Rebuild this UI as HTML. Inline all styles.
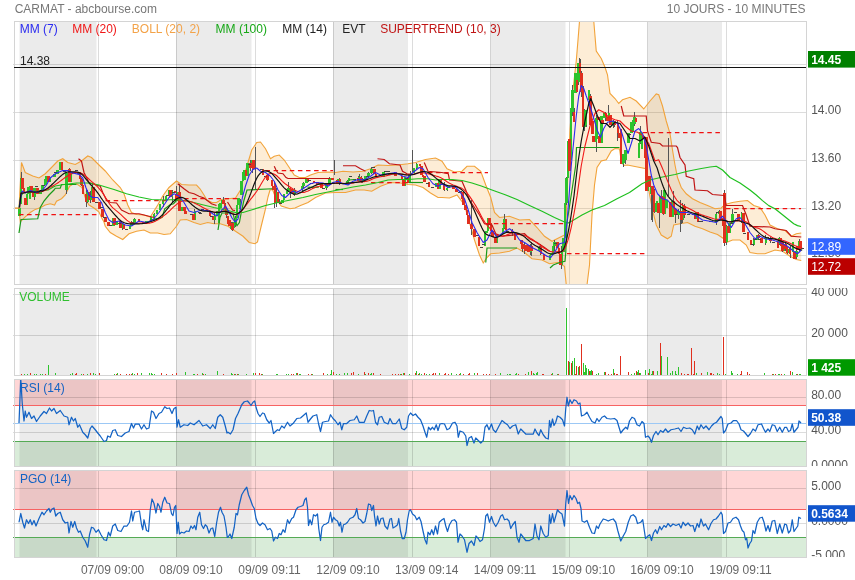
<!DOCTYPE html>
<html lang="fr"><head><meta charset="utf-8"><title>CARMAT - abcbourse.com</title>
<style>html,body{margin:0;padding:0;background:#fff}svg{display:block;will-change:transform}</style></head>
<body>
<svg width="855" height="580" viewBox="0 0 855 580" font-family="'Liberation Sans', Arial, sans-serif" font-size="12">
<defs>
<clipPath id="c1"><rect x="14" y="21" width="792" height="264"/></clipPath>
<clipPath id="t1"><rect x="806" y="21" width="49" height="263"/></clipPath>
<clipPath id="c2"><rect x="14" y="288" width="792" height="88"/></clipPath>
<clipPath id="t2"><rect x="806" y="288" width="49" height="87"/></clipPath>
<clipPath id="c3"><rect x="14" y="379" width="792" height="88"/></clipPath>
<clipPath id="t3"><rect x="806" y="379" width="49" height="87"/></clipPath>
<clipPath id="c4"><rect x="14" y="470" width="792" height="88"/></clipPath>
<clipPath id="t4"><rect x="806" y="470" width="49" height="87"/></clipPath>
</defs>
<rect width="855" height="580" fill="#fff"/>
<g shape-rendering="crispEdges">
<rect x="13" y="64" width="793" height="1" fill="#000" fill-opacity="0.137"/>
<rect x="13" y="112" width="793" height="1" fill="#000" fill-opacity="0.137"/>
<rect x="13" y="160" width="793" height="1" fill="#000" fill-opacity="0.137"/>
<rect x="13" y="208" width="793" height="1" fill="#000" fill-opacity="0.137"/>
<rect x="13" y="255" width="793" height="1" fill="#000" fill-opacity="0.137"/>
<rect x="98" y="21" width="1" height="263" fill="#000" fill-opacity="0.137"/>
<rect x="176" y="21" width="1" height="263" fill="#000" fill-opacity="0.137"/>
<rect x="255" y="21" width="1" height="263" fill="#000" fill-opacity="0.137"/>
<rect x="333" y="21" width="1" height="263" fill="#000" fill-opacity="0.137"/>
<rect x="412" y="21" width="1" height="263" fill="#000" fill-opacity="0.137"/>
<rect x="490" y="21" width="1" height="263" fill="#000" fill-opacity="0.137"/>
<rect x="569" y="21" width="1" height="263" fill="#000" fill-opacity="0.137"/>
<rect x="647" y="21" width="1" height="263" fill="#000" fill-opacity="0.137"/>
<rect x="726" y="21" width="1" height="263" fill="#000" fill-opacity="0.137"/>
<rect x="19.5" y="21" width="77.0" height="263" fill="#000" fill-opacity="0.08" shape-rendering="auto"/>
<rect x="176" y="21" width="75.5" height="263" fill="#000" fill-opacity="0.08" shape-rendering="auto"/>
<rect x="333" y="21" width="75" height="263" fill="#000" fill-opacity="0.08" shape-rendering="auto"/>
<rect x="490.5" y="21" width="75.0" height="263" fill="#000" fill-opacity="0.08" shape-rendering="auto"/>
<rect x="647.5" y="21" width="74.5" height="263" fill="#000" fill-opacity="0.08" shape-rendering="auto"/>
</g>
<g clip-path="url(#c1)">
<polygon points="19.00,208.00 21.50,162.50 25.25,172.50 32.75,176.00 39.00,178.00 45.25,173.75 51.50,167.50 57.75,161.00 62.75,158.75 67.75,162.50 75.25,164.50 81.50,161.00 87.75,156.00 91.50,157.50 98.50,164.50 105.25,171.00 112.75,180.00 120.25,187.50 124.00,193.75 127.75,205.00 131.50,212.50 136.50,214.50 144.00,215.00 150.25,217.00 157.75,205.00 162.75,196.00 169.00,187.50 176.50,181.00 181.50,184.50 189.00,185.00 196.50,185.00 200.00,188.75 204.00,195.00 207.00,200.00 212.00,202.50 216.50,202.50 221.50,199.50 228.00,198.75 235.50,198.00 240.50,190.00 244.25,175.00 248.00,162.50 251.75,150.00 256.75,142.50 260.50,142.00 265.50,148.75 270.50,158.75 274.25,156.25 279.25,155.00 284.25,160.00 289.25,167.50 294.25,175.00 299.25,177.50 305.50,177.50 310.50,175.00 318.00,172.50 328.00,172.00 335.50,172.50 343.00,171.25 353.00,172.00 363.00,171.25 370.50,168.75 378.00,165.00 388.00,165.50 398.00,165.00 408.00,163.75 415.50,162.50 425.50,159.50 435.50,158.00 442.00,161.25 447.00,168.75 454.50,172.00 462.00,171.25 467.00,166.25 474.50,166.25 480.75,171.25 485.75,185.00 490.75,197.50 494.50,212.50 499.50,217.50 509.50,216.25 519.50,220.00 529.50,219.50 537.00,227.50 544.50,236.25 552.00,241.25 559.50,237.50 564.50,235.00 566.25,215.00 568.00,170.00 570.00,130.00 573.00,90.00 576.25,61.00 578.00,40.00 580.00,15.00 585.00,5.00 590.00,8.00 593.75,21.00 595.00,36.00 596.25,51.00 601.25,58.50 605.00,67.25 607.50,74.75 610.00,93.50 615.00,98.50 618.75,103.50 622.50,99.75 630.00,97.25 636.25,101.00 643.75,109.00 650.00,101.00 656.25,94.00 658.75,94.75 662.50,106.00 666.25,121.00 670.00,133.50 672.50,150.00 675.00,165.00 677.50,177.50 681.25,187.50 686.25,193.75 692.50,198.75 700.00,202.50 707.50,205.50 715.00,208.75 721.25,208.00 725.00,204.50 732.50,202.50 740.00,201.25 747.50,200.50 753.75,205.50 760.00,207.50 765.00,215.00 770.00,225.00 777.50,228.75 785.00,230.50 791.25,236.25 796.25,233.75 801.25,233.00 801.25,260.50 796.25,259.50 790.00,256.25 782.50,251.25 775.00,250.00 765.00,253.75 757.50,253.75 750.00,252.50 746.25,245.00 740.00,240.00 732.50,240.00 726.25,242.50 723.75,238.75 717.50,234.50 710.00,232.00 702.50,228.75 695.00,226.25 687.50,222.50 680.00,223.75 673.75,225.00 671.25,236.25 667.50,238.75 661.25,235.00 656.25,225.00 652.50,210.00 648.75,190.00 646.25,168.75 637.50,167.00 627.50,165.00 623.75,165.50 621.25,161.00 619.50,149.00 615.00,148.50 611.25,151.00 606.25,159.75 601.25,161.00 597.00,167.50 594.50,185.00 592.00,215.00 589.50,265.00 587.00,285.00 585.00,320.00 575.00,340.00 568.00,320.00 566.25,285.00 564.50,266.25 557.00,262.50 549.50,263.75 542.00,260.00 532.00,258.75 524.50,252.50 517.00,248.00 509.50,251.25 499.50,253.00 490.75,253.75 487.00,257.50 483.25,263.00 479.50,255.00 474.50,240.00 469.50,222.50 464.50,205.00 457.00,195.00 449.50,198.00 442.00,197.50 438.00,197.50 430.50,193.00 423.00,187.50 415.50,185.00 408.00,184.50 400.50,183.00 390.50,182.50 380.50,186.25 371.75,191.25 364.25,190.00 355.50,190.00 345.50,192.50 335.50,192.50 325.50,193.00 315.50,197.50 308.00,202.50 300.50,205.50 295.00,208.00 290.00,208.75 281.25,206.00 277.50,201.00 275.00,196.00 272.50,189.50 270.00,190.00 268.00,197.00 265.00,211.00 261.25,226.00 257.50,242.00 255.00,243.75 249.25,242.50 243.00,236.25 235.50,231.25 228.00,226.25 220.25,223.75 214.00,223.75 207.75,222.50 200.25,224.50 194.00,222.50 186.50,219.50 180.25,220.00 176.50,226.25 170.25,233.75 164.00,234.50 157.75,233.00 150.25,233.00 144.00,230.00 136.50,231.25 129.00,233.75 122.75,239.50 116.50,236.25 110.25,232.50 105.25,226.25 104.00,222.00 101.50,217.50 99.00,212.00 94.00,208.00 89.00,205.00 86.00,200.00 84.00,193.75 82.00,187.50 76.50,183.75 72.75,184.40 69.60,186.25 67.75,190.00 65.25,195.00 61.50,198.75 56.50,201.25 54.60,205.00 50.25,203.75 45.25,205.00 40.90,207.50 35.25,209.40 30.25,212.50 25.25,216.90 20.25,221.90 19.00,208.00" fill="#f5a533" fill-opacity="0.2"/>
<polyline points="19.00,208.00 21.50,162.50 25.25,172.50 32.75,176.00 39.00,178.00 45.25,173.75 51.50,167.50 57.75,161.00 62.75,158.75 67.75,162.50 75.25,164.50 81.50,161.00 87.75,156.00 91.50,157.50 98.50,164.50 105.25,171.00 112.75,180.00 120.25,187.50 124.00,193.75 127.75,205.00 131.50,212.50 136.50,214.50 144.00,215.00 150.25,217.00 157.75,205.00 162.75,196.00 169.00,187.50 176.50,181.00 181.50,184.50 189.00,185.00 196.50,185.00 200.00,188.75 204.00,195.00 207.00,200.00 212.00,202.50 216.50,202.50 221.50,199.50 228.00,198.75 235.50,198.00 240.50,190.00 244.25,175.00 248.00,162.50 251.75,150.00 256.75,142.50 260.50,142.00 265.50,148.75 270.50,158.75 274.25,156.25 279.25,155.00 284.25,160.00 289.25,167.50 294.25,175.00 299.25,177.50 305.50,177.50 310.50,175.00 318.00,172.50 328.00,172.00 335.50,172.50 343.00,171.25 353.00,172.00 363.00,171.25 370.50,168.75 378.00,165.00 388.00,165.50 398.00,165.00 408.00,163.75 415.50,162.50 425.50,159.50 435.50,158.00 442.00,161.25 447.00,168.75 454.50,172.00 462.00,171.25 467.00,166.25 474.50,166.25 480.75,171.25 485.75,185.00 490.75,197.50 494.50,212.50 499.50,217.50 509.50,216.25 519.50,220.00 529.50,219.50 537.00,227.50 544.50,236.25 552.00,241.25 559.50,237.50 564.50,235.00 566.25,215.00 568.00,170.00 570.00,130.00 573.00,90.00 576.25,61.00 578.00,40.00 580.00,15.00 585.00,5.00 590.00,8.00 593.75,21.00 595.00,36.00 596.25,51.00 601.25,58.50 605.00,67.25 607.50,74.75 610.00,93.50 615.00,98.50 618.75,103.50 622.50,99.75 630.00,97.25 636.25,101.00 643.75,109.00 650.00,101.00 656.25,94.00 658.75,94.75 662.50,106.00 666.25,121.00 670.00,133.50 672.50,150.00 675.00,165.00 677.50,177.50 681.25,187.50 686.25,193.75 692.50,198.75 700.00,202.50 707.50,205.50 715.00,208.75 721.25,208.00 725.00,204.50 732.50,202.50 740.00,201.25 747.50,200.50 753.75,205.50 760.00,207.50 765.00,215.00 770.00,225.00 777.50,228.75 785.00,230.50 791.25,236.25 796.25,233.75 801.25,233.00" fill="none" stroke="#f2a33a" stroke-width="1.1"/>
<polyline points="19.00,208.00 20.25,221.90 25.25,216.90 30.25,212.50 35.25,209.40 40.90,207.50 45.25,205.00 50.25,203.75 54.60,205.00 56.50,201.25 61.50,198.75 65.25,195.00 67.75,190.00 69.60,186.25 72.75,184.40 76.50,183.75 82.00,187.50 84.00,193.75 86.00,200.00 89.00,205.00 94.00,208.00 99.00,212.00 101.50,217.50 104.00,222.00 105.25,226.25 110.25,232.50 116.50,236.25 122.75,239.50 129.00,233.75 136.50,231.25 144.00,230.00 150.25,233.00 157.75,233.00 164.00,234.50 170.25,233.75 176.50,226.25 180.25,220.00 186.50,219.50 194.00,222.50 200.25,224.50 207.75,222.50 214.00,223.75 220.25,223.75 228.00,226.25 235.50,231.25 243.00,236.25 249.25,242.50 255.00,243.75 257.50,242.00 261.25,226.00 265.00,211.00 268.00,197.00 270.00,190.00 272.50,189.50 275.00,196.00 277.50,201.00 281.25,206.00 290.00,208.75 295.00,208.00 300.50,205.50 308.00,202.50 315.50,197.50 325.50,193.00 335.50,192.50 345.50,192.50 355.50,190.00 364.25,190.00 371.75,191.25 380.50,186.25 390.50,182.50 400.50,183.00 408.00,184.50 415.50,185.00 423.00,187.50 430.50,193.00 438.00,197.50 442.00,197.50 449.50,198.00 457.00,195.00 464.50,205.00 469.50,222.50 474.50,240.00 479.50,255.00 483.25,263.00 487.00,257.50 490.75,253.75 499.50,253.00 509.50,251.25 517.00,248.00 524.50,252.50 532.00,258.75 542.00,260.00 549.50,263.75 557.00,262.50 564.50,266.25 566.25,285.00 568.00,320.00 575.00,340.00 585.00,320.00 587.00,285.00 589.50,265.00 592.00,215.00 594.50,185.00 597.00,167.50 601.25,161.00 606.25,159.75 611.25,151.00 615.00,148.50 619.50,149.00 621.25,161.00 623.75,165.50 627.50,165.00 637.50,167.00 646.25,168.75 648.75,190.00 652.50,210.00 656.25,225.00 661.25,235.00 667.50,238.75 671.25,236.25 673.75,225.00 680.00,223.75 687.50,222.50 695.00,226.25 702.50,228.75 710.00,232.00 717.50,234.50 723.75,238.75 726.25,242.50 732.50,240.00 740.00,240.00 746.25,245.00 750.00,252.50 757.50,253.75 765.00,253.75 775.00,250.00 782.50,251.25 790.00,256.25 796.25,259.50 801.25,260.50" fill="none" stroke="#f2a33a" stroke-width="1.1"/>
<g shape-rendering="crispEdges">
<rect x="34.1" y="187.9" width="1" height="11.8" fill="#555"/>
<rect x="65.8" y="171.6" width="1" height="22.1" fill="#555"/>
<rect x="68.9" y="168.4" width="1" height="13.6" fill="#555"/>
<rect x="81.0" y="178.0" width="1" height="7.8" fill="#555"/>
<rect x="85.5" y="188.5" width="1" height="18.6" fill="#555"/>
<rect x="87.0" y="189.5" width="1" height="13.2" fill="#555"/>
<rect x="90.0" y="190.9" width="1" height="11.9" fill="#555"/>
<rect x="91.5" y="184.0" width="1" height="15.2" fill="#555"/>
<rect x="121.7" y="222.5" width="1" height="7.9" fill="#555"/>
<rect x="130.8" y="220.7" width="1" height="5.4" fill="#555"/>
<rect x="133.8" y="218.3" width="1" height="4.7" fill="#555"/>
<rect x="153.5" y="212.5" width="1" height="6.6" fill="#555"/>
<rect x="162.5" y="195.7" width="1" height="11.4" fill="#555"/>
<rect x="171.6" y="190.1" width="1" height="13.2" fill="#555"/>
<rect x="176.1" y="186.0" width="1" height="15.4" fill="#555"/>
<rect x="179.2" y="184.2" width="1" height="27.2" fill="#555"/>
<rect x="194.3" y="209.4" width="1" height="11.0" fill="#555"/>
<rect x="213.9" y="213.3" width="1" height="10.5" fill="#555"/>
<rect x="218.5" y="203.9" width="1" height="18.9" fill="#555"/>
<rect x="223.0" y="197.4" width="1" height="6.8" fill="#555"/>
<rect x="224.5" y="202.6" width="1" height="8.7" fill="#555"/>
<rect x="226.0" y="208.2" width="1" height="9.5" fill="#555"/>
<rect x="230.5" y="222.4" width="1" height="7.0" fill="#555"/>
<rect x="232.1" y="222.2" width="1" height="8.6" fill="#555"/>
<rect x="235.1" y="215.8" width="1" height="11.4" fill="#555"/>
<rect x="239.6" y="199.0" width="1" height="11.0" fill="#555"/>
<rect x="250.2" y="159.8" width="1" height="10.8" fill="#555"/>
<rect x="251.7" y="159.7" width="1" height="13.5" fill="#555"/>
<rect x="266.8" y="173.8" width="1" height="6.9" fill="#555"/>
<rect x="274.4" y="181.6" width="1" height="26.8" fill="#555"/>
<rect x="275.9" y="188.1" width="1" height="19.3" fill="#555"/>
<rect x="278.9" y="199.2" width="1" height="5.1" fill="#555"/>
<rect x="288.0" y="182.0" width="1" height="9.8" fill="#555"/>
<rect x="289.5" y="186.9" width="1" height="10.8" fill="#555"/>
<rect x="291.0" y="189.0" width="1" height="4.1" fill="#555"/>
<rect x="292.5" y="190.1" width="1" height="5.0" fill="#555"/>
<rect x="294.0" y="187.8" width="1" height="7.7" fill="#555"/>
<rect x="301.6" y="186.0" width="1" height="5.5" fill="#555"/>
<rect x="303.1" y="181.9" width="1" height="7.5" fill="#555"/>
<rect x="307.6" y="177.5" width="1" height="4.0" fill="#555"/>
<rect x="325.7" y="184.0" width="1" height="6.0" fill="#555"/>
<rect x="328.8" y="177.4" width="1" height="7.4" fill="#555"/>
<rect x="339.3" y="178.4" width="1" height="6.4" fill="#555"/>
<rect x="346.9" y="179.8" width="1" height="4.9" fill="#555"/>
<rect x="357.5" y="176.0" width="1" height="5.2" fill="#555"/>
<rect x="359.0" y="174.1" width="1" height="8.3" fill="#555"/>
<rect x="360.5" y="175.8" width="1" height="6.8" fill="#555"/>
<rect x="362.0" y="178.2" width="1" height="4.5" fill="#555"/>
<rect x="368.0" y="171.9" width="1" height="6.0" fill="#555"/>
<rect x="371.1" y="166.8" width="1" height="7.1" fill="#555"/>
<rect x="375.6" y="173.6" width="1" height="3.8" fill="#555"/>
<rect x="410.3" y="170.8" width="1" height="3.4" fill="#555"/>
<rect x="416.4" y="163.1" width="1" height="6.2" fill="#555"/>
<rect x="420.9" y="165.6" width="1" height="9.8" fill="#555"/>
<rect x="422.4" y="171.3" width="1" height="4.9" fill="#555"/>
<rect x="443.6" y="181.9" width="1" height="9.5" fill="#555"/>
<rect x="446.6" y="186.1" width="1" height="4.8" fill="#555"/>
<rect x="470.8" y="222.6" width="1" height="12.5" fill="#555"/>
<rect x="504.0" y="214.4" width="1" height="14.6" fill="#555"/>
<rect x="511.6" y="228.8" width="1" height="7.5" fill="#555"/>
<rect x="522.2" y="243.2" width="1" height="8.7" fill="#555"/>
<rect x="523.7" y="242.0" width="1" height="12.1" fill="#555"/>
<rect x="529.7" y="243.6" width="1" height="11.1" fill="#555"/>
<rect x="531.2" y="242.2" width="1" height="13.9" fill="#555"/>
<rect x="538.8" y="245.8" width="1" height="6.1" fill="#555"/>
<rect x="540.3" y="244.2" width="1" height="10.5" fill="#555"/>
<rect x="553.9" y="240.0" width="1" height="11.1" fill="#555"/>
<rect x="561.4" y="246.4" width="1" height="23.0" fill="#555"/>
<rect x="566.0" y="177.1" width="1" height="27.5" fill="#555"/>
<rect x="572.0" y="84.6" width="1" height="31.8" fill="#555"/>
<rect x="573.5" y="107.8" width="1" height="14.6" fill="#555"/>
<rect x="578.1" y="62.7" width="1" height="22.4" fill="#555"/>
<rect x="579.6" y="59.3" width="1" height="15.5" fill="#555"/>
<rect x="581.1" y="71.3" width="1" height="26.1" fill="#555"/>
<rect x="582.6" y="85.8" width="1" height="43.8" fill="#555"/>
<rect x="584.1" y="109.2" width="1" height="21.3" fill="#555"/>
<rect x="585.6" y="109.6" width="1" height="17.7" fill="#555"/>
<rect x="590.2" y="94.1" width="1" height="31.2" fill="#555"/>
<rect x="596.2" y="114.9" width="1" height="28.5" fill="#555"/>
<rect x="600.7" y="115.7" width="1" height="27.2" fill="#555"/>
<rect x="605.3" y="111.5" width="1" height="9.8" fill="#555"/>
<rect x="608.3" y="104.9" width="1" height="15.5" fill="#555"/>
<rect x="611.3" y="120.4" width="1" height="5.3" fill="#555"/>
<rect x="612.8" y="119.7" width="1" height="8.2" fill="#555"/>
<rect x="614.3" y="120.5" width="1" height="6.4" fill="#555"/>
<rect x="617.4" y="119.6" width="1" height="21.3" fill="#555"/>
<rect x="623.4" y="153.6" width="1" height="13.6" fill="#555"/>
<rect x="624.9" y="150.0" width="1" height="14.4" fill="#555"/>
<rect x="634.0" y="112.2" width="1" height="13.3" fill="#555"/>
<rect x="638.5" y="137.8" width="1" height="20.4" fill="#555"/>
<rect x="640.0" y="126.1" width="1" height="18.1" fill="#555"/>
<rect x="653.6" y="189.1" width="1" height="23.9" fill="#555"/>
<rect x="661.2" y="190.3" width="1" height="10.3" fill="#555"/>
<rect x="662.7" y="195.7" width="1" height="19.5" fill="#555"/>
<rect x="673.3" y="190.5" width="1" height="23.0" fill="#555"/>
<rect x="674.8" y="208.1" width="1" height="14.4" fill="#555"/>
<rect x="677.8" y="208.8" width="1" height="9.8" fill="#555"/>
<rect x="680.8" y="210.7" width="1" height="13.2" fill="#555"/>
<rect x="682.3" y="202.7" width="1" height="20.2" fill="#555"/>
<rect x="683.8" y="204.1" width="1" height="13.8" fill="#555"/>
<rect x="715.6" y="213.4" width="1" height="11.7" fill="#555"/>
<rect x="718.6" y="209.8" width="1" height="4.6" fill="#555"/>
<rect x="723.1" y="215.4" width="1" height="12.4" fill="#555"/>
<rect x="726.1" y="224.6" width="1" height="20.3" fill="#555"/>
<rect x="732.2" y="209.4" width="1" height="14.9" fill="#555"/>
<rect x="741.3" y="211.7" width="1" height="11.4" fill="#555"/>
<rect x="753.3" y="238.4" width="1" height="8.0" fill="#555"/>
<rect x="757.9" y="234.0" width="1" height="5.2" fill="#555"/>
<rect x="765.4" y="235.2" width="1" height="10.2" fill="#555"/>
<rect x="770.0" y="237.2" width="1" height="5.5" fill="#555"/>
<rect x="779.0" y="237.1" width="1" height="7.6" fill="#555"/>
<rect x="782.1" y="241.5" width="1" height="10.7" fill="#555"/>
<rect x="785.1" y="243.0" width="1" height="7.7" fill="#555"/>
<rect x="786.6" y="246.8" width="1" height="7.3" fill="#555"/>
<rect x="789.6" y="246.1" width="1" height="11.6" fill="#555"/>
<rect x="795.7" y="248.1" width="1" height="10.8" fill="#555"/>
<rect x="798.7" y="239.2" width="1" height="11.3" fill="#555"/>
<rect x="800.2" y="240.7" width="1" height="7.9" fill="#555"/>
<rect x="566.8" y="141.0" width="1" height="49.0" fill="#555"/>
<rect x="596.1" y="117.0" width="1" height="35.0" fill="#555"/>
<rect x="650.5" y="186.0" width="1" height="34.0" fill="#555"/>
<rect x="255.0" y="147.0" width="1" height="43.0" fill="#555"/>
<rect x="412.0" y="150.0" width="1" height="22.0" fill="#555"/>
<rect x="333.5" y="160.0" width="1" height="15.0" fill="#555"/>
<rect x="668.0" y="138.0" width="1" height="58.0" fill="#555"/>
<rect x="578.8" y="58.0" width="1" height="17.0" fill="#555"/>
<rect x="21.0" y="172.0" width="1" height="32.0" fill="#555"/>
<rect x="724.0" y="190.0" width="1" height="56.0" fill="#555"/>
<rect x="651.5" y="195.0" width="1" height="27.0" fill="#555"/>
<rect x="658.5" y="200.0" width="1" height="28.0" fill="#555"/>
<rect x="470.5" y="200.0" width="1" height="30.0" fill="#555"/>
<rect x="679.5" y="200.0" width="1" height="32.0" fill="#555"/>
<rect x="18.2" y="208.0" width="2.6" height="7.6" fill="#2dc42d"/>
<rect x="19.7" y="178.0" width="2.6" height="25.7" fill="#2dc42d"/>
<rect x="25.8" y="194.0" width="2.6" height="11.0" fill="#2dc42d"/>
<rect x="27.3" y="186.8" width="2.6" height="7.2" fill="#2dc42d"/>
<rect x="28.8" y="186.0" width="2.6" height="13.0" fill="#2dc42d"/>
<rect x="33.3" y="188.0" width="2.6" height="9.0" fill="#2dc42d"/>
<rect x="39.4" y="190.3" width="2.6" height="3.4" fill="#2dc42d"/>
<rect x="40.9" y="185.0" width="2.6" height="5.3" fill="#2dc42d"/>
<rect x="43.9" y="179.0" width="2.6" height="6.0" fill="#2dc42d"/>
<rect x="45.4" y="175.7" width="2.6" height="3.4" fill="#2dc42d"/>
<rect x="48.4" y="176.5" width="2.6" height="5.3" fill="#2dc42d"/>
<rect x="53.0" y="173.8" width="2.6" height="2.7" fill="#2dc42d"/>
<rect x="56.0" y="169.6" width="2.6" height="4.2" fill="#2dc42d"/>
<rect x="59.0" y="161.8" width="2.6" height="7.8" fill="#2dc42d"/>
<rect x="65.0" y="172.5" width="2.6" height="17.5" fill="#2dc42d"/>
<rect x="69.6" y="171.6" width="2.6" height="10.4" fill="#2dc42d"/>
<rect x="86.2" y="192.1" width="2.6" height="9.7" fill="#2dc42d"/>
<rect x="89.2" y="195.0" width="2.6" height="5.0" fill="#2dc42d"/>
<rect x="90.7" y="186.7" width="2.6" height="8.3" fill="#2dc42d"/>
<rect x="111.9" y="217.5" width="2.6" height="8.5" fill="#2dc42d"/>
<rect x="114.9" y="221.0" width="2.6" height="4.0" fill="#2dc42d"/>
<rect x="120.9" y="224.3" width="2.6" height="3.5" fill="#2dc42d"/>
<rect x="128.5" y="226.0" width="2.6" height="3.1" fill="#2dc42d"/>
<rect x="130.0" y="222.9" width="2.6" height="3.2" fill="#2dc42d"/>
<rect x="133.0" y="218.5" width="2.6" height="4.3" fill="#2dc42d"/>
<rect x="143.6" y="222.6" width="2.6" height="1.8" fill="#2dc42d"/>
<rect x="145.1" y="221.0" width="2.6" height="1.6" fill="#2dc42d"/>
<rect x="149.7" y="217.4" width="2.6" height="3.6" fill="#2dc42d"/>
<rect x="152.7" y="214.2" width="2.6" height="3.1" fill="#2dc42d"/>
<rect x="155.7" y="210.2" width="2.6" height="4.0" fill="#2dc42d"/>
<rect x="158.7" y="203.9" width="2.6" height="6.3" fill="#2dc42d"/>
<rect x="161.7" y="200.1" width="2.6" height="3.8" fill="#2dc42d"/>
<rect x="164.8" y="196.1" width="2.6" height="4.0" fill="#2dc42d"/>
<rect x="167.8" y="190.1" width="2.6" height="6.1" fill="#2dc42d"/>
<rect x="170.8" y="190.6" width="2.6" height="6.0" fill="#2dc42d"/>
<rect x="176.9" y="191.8" width="2.6" height="9.6" fill="#2dc42d"/>
<rect x="179.9" y="206.6" width="2.6" height="4.5" fill="#2dc42d"/>
<rect x="193.5" y="211.4" width="2.6" height="8.5" fill="#2dc42d"/>
<rect x="213.1" y="215.6" width="2.6" height="4.5" fill="#2dc42d"/>
<rect x="216.1" y="210.7" width="2.6" height="4.9" fill="#2dc42d"/>
<rect x="217.7" y="204.0" width="2.6" height="18.5" fill="#2dc42d"/>
<rect x="219.2" y="203.0" width="2.6" height="5.0" fill="#2dc42d"/>
<rect x="220.7" y="200.4" width="2.6" height="2.6" fill="#2dc42d"/>
<rect x="229.7" y="223.0" width="2.6" height="6.0" fill="#2dc42d"/>
<rect x="232.8" y="222.0" width="2.6" height="6.0" fill="#2dc42d"/>
<rect x="234.3" y="217.5" width="2.6" height="7.5" fill="#2dc42d"/>
<rect x="235.8" y="205.1" width="2.6" height="12.4" fill="#2dc42d"/>
<rect x="237.3" y="197.6" width="2.6" height="7.5" fill="#2dc42d"/>
<rect x="238.8" y="202.0" width="2.6" height="7.0" fill="#2dc42d"/>
<rect x="240.3" y="181.0" width="2.6" height="14.0" fill="#2dc42d"/>
<rect x="241.8" y="172.0" width="2.6" height="9.0" fill="#2dc42d"/>
<rect x="243.3" y="170.0" width="2.6" height="10.0" fill="#2dc42d"/>
<rect x="246.4" y="162.9" width="2.6" height="12.9" fill="#2dc42d"/>
<rect x="250.9" y="160.0" width="2.6" height="7.8" fill="#2dc42d"/>
<rect x="275.1" y="191.9" width="2.6" height="11.1" fill="#2dc42d"/>
<rect x="281.1" y="200.1" width="2.6" height="2.5" fill="#2dc42d"/>
<rect x="282.6" y="194.0" width="2.6" height="6.1" fill="#2dc42d"/>
<rect x="285.6" y="190.8" width="2.6" height="3.2" fill="#2dc42d"/>
<rect x="287.2" y="187.7" width="2.6" height="3.1" fill="#2dc42d"/>
<rect x="293.2" y="190.2" width="2.6" height="3.8" fill="#2dc42d"/>
<rect x="300.8" y="186.4" width="2.6" height="3.8" fill="#2dc42d"/>
<rect x="302.3" y="183.3" width="2.6" height="3.1" fill="#2dc42d"/>
<rect x="305.3" y="179.1" width="2.6" height="4.3" fill="#2dc42d"/>
<rect x="317.4" y="182.9" width="2.6" height="2.3" fill="#2dc42d"/>
<rect x="324.9" y="184.1" width="2.6" height="4.0" fill="#2dc42d"/>
<rect x="328.0" y="178.4" width="2.6" height="5.6" fill="#2dc42d"/>
<rect x="337.0" y="179.4" width="2.6" height="4.1" fill="#2dc42d"/>
<rect x="346.1" y="181.4" width="2.6" height="3.1" fill="#2dc42d"/>
<rect x="347.6" y="178.2" width="2.6" height="3.2" fill="#2dc42d"/>
<rect x="358.2" y="176.9" width="2.6" height="4.0" fill="#2dc42d"/>
<rect x="361.2" y="179.9" width="2.6" height="2.4" fill="#2dc42d"/>
<rect x="364.2" y="176.3" width="2.6" height="3.5" fill="#2dc42d"/>
<rect x="367.2" y="173.1" width="2.6" height="3.2" fill="#2dc42d"/>
<rect x="370.3" y="168.7" width="2.6" height="4.4" fill="#2dc42d"/>
<rect x="382.4" y="172.1" width="2.6" height="5.1" fill="#2dc42d"/>
<rect x="403.5" y="176.8" width="2.6" height="9.2" fill="#2dc42d"/>
<rect x="408.0" y="173.9" width="2.6" height="9.1" fill="#2dc42d"/>
<rect x="409.5" y="172.7" width="2.6" height="1.5" fill="#2dc42d"/>
<rect x="412.6" y="167.6" width="2.6" height="5.1" fill="#2dc42d"/>
<rect x="415.6" y="164.4" width="2.6" height="3.1" fill="#2dc42d"/>
<rect x="435.2" y="182.5" width="2.6" height="4.2" fill="#2dc42d"/>
<rect x="438.3" y="178.9" width="2.6" height="9.9" fill="#2dc42d"/>
<rect x="445.8" y="188.3" width="2.6" height="1.7" fill="#2dc42d"/>
<rect x="447.3" y="185.8" width="2.6" height="2.4" fill="#2dc42d"/>
<rect x="483.6" y="233.2" width="2.6" height="12.3" fill="#2dc42d"/>
<rect x="485.1" y="230.5" width="2.6" height="2.7" fill="#2dc42d"/>
<rect x="486.6" y="218.2" width="2.6" height="12.4" fill="#2dc42d"/>
<rect x="495.7" y="233.9" width="2.6" height="9.2" fill="#2dc42d"/>
<rect x="501.7" y="227.8" width="2.6" height="6.1" fill="#2dc42d"/>
<rect x="503.2" y="219.1" width="2.6" height="8.7" fill="#2dc42d"/>
<rect x="522.9" y="244.5" width="2.6" height="4.4" fill="#2dc42d"/>
<rect x="525.9" y="245.4" width="2.6" height="5.6" fill="#2dc42d"/>
<rect x="528.9" y="245.6" width="2.6" height="6.6" fill="#2dc42d"/>
<rect x="538.0" y="247.2" width="2.6" height="3.9" fill="#2dc42d"/>
<rect x="548.6" y="255.0" width="2.6" height="4.7" fill="#2dc42d"/>
<rect x="550.1" y="253.2" width="2.6" height="1.8" fill="#2dc42d"/>
<rect x="551.6" y="246.4" width="2.6" height="6.8" fill="#2dc42d"/>
<rect x="553.1" y="242.0" width="2.6" height="4.3" fill="#2dc42d"/>
<rect x="560.6" y="251.9" width="2.6" height="13.0" fill="#2dc42d"/>
<rect x="562.2" y="237.9" width="2.6" height="14.0" fill="#2dc42d"/>
<rect x="563.7" y="202.9" width="2.6" height="35.0" fill="#2dc42d"/>
<rect x="565.2" y="177.8" width="2.6" height="25.1" fill="#2dc42d"/>
<rect x="566.7" y="141.0" width="2.6" height="37.0" fill="#2dc42d"/>
<rect x="569.7" y="108.0" width="2.6" height="52.0" fill="#2dc42d"/>
<rect x="571.2" y="90.0" width="2.6" height="22.0" fill="#2dc42d"/>
<rect x="574.2" y="72.5" width="2.6" height="20.0" fill="#2dc42d"/>
<rect x="577.3" y="63.0" width="2.6" height="19.0" fill="#2dc42d"/>
<rect x="583.3" y="110.0" width="2.6" height="17.0" fill="#2dc42d"/>
<rect x="584.8" y="110.0" width="2.6" height="15.0" fill="#2dc42d"/>
<rect x="587.8" y="90.0" width="2.6" height="10.0" fill="#2dc42d"/>
<rect x="593.9" y="138.6" width="2.6" height="3.4" fill="#2dc42d"/>
<rect x="595.4" y="117.5" width="2.6" height="21.5" fill="#2dc42d"/>
<rect x="599.9" y="115.9" width="2.6" height="26.6" fill="#2dc42d"/>
<rect x="603.0" y="113.0" width="2.6" height="5.0" fill="#2dc42d"/>
<rect x="607.5" y="113.0" width="2.6" height="4.0" fill="#2dc42d"/>
<rect x="610.5" y="120.8" width="2.6" height="4.2" fill="#2dc42d"/>
<rect x="612.0" y="121.0" width="2.6" height="4.0" fill="#2dc42d"/>
<rect x="621.1" y="153.8" width="2.6" height="10.0" fill="#2dc42d"/>
<rect x="622.6" y="158.0" width="2.6" height="5.0" fill="#2dc42d"/>
<rect x="624.1" y="150.0" width="2.6" height="10.0" fill="#2dc42d"/>
<rect x="627.1" y="132.5" width="2.6" height="10.0" fill="#2dc42d"/>
<rect x="630.2" y="121.5" width="2.6" height="11.0" fill="#2dc42d"/>
<rect x="631.7" y="120.0" width="2.6" height="11.0" fill="#2dc42d"/>
<rect x="633.2" y="117.0" width="2.6" height="7.0" fill="#2dc42d"/>
<rect x="637.7" y="142.5" width="2.6" height="15.0" fill="#2dc42d"/>
<rect x="639.2" y="131.7" width="2.6" height="10.8" fill="#2dc42d"/>
<rect x="640.7" y="136.0" width="2.6" height="13.0" fill="#2dc42d"/>
<rect x="646.8" y="176.0" width="2.6" height="15.0" fill="#2dc42d"/>
<rect x="649.8" y="186.0" width="2.6" height="8.0" fill="#2dc42d"/>
<rect x="654.3" y="203.0" width="2.6" height="9.0" fill="#2dc42d"/>
<rect x="655.8" y="200.5" width="2.6" height="2.5" fill="#2dc42d"/>
<rect x="658.9" y="195.9" width="2.6" height="17.1" fill="#2dc42d"/>
<rect x="663.4" y="190.1" width="2.6" height="23.9" fill="#2dc42d"/>
<rect x="664.9" y="200.0" width="2.6" height="8.0" fill="#2dc42d"/>
<rect x="671.0" y="201.3" width="2.6" height="15.7" fill="#2dc42d"/>
<rect x="677.0" y="210.8" width="2.6" height="4.4" fill="#2dc42d"/>
<rect x="681.5" y="205.7" width="2.6" height="14.6" fill="#2dc42d"/>
<rect x="695.1" y="211.9" width="2.6" height="6.9" fill="#2dc42d"/>
<rect x="714.8" y="213.6" width="2.6" height="8.7" fill="#2dc42d"/>
<rect x="717.8" y="210.6" width="2.6" height="3.0" fill="#2dc42d"/>
<rect x="725.3" y="226.0" width="2.6" height="16.0" fill="#2dc42d"/>
<rect x="728.4" y="222.6" width="2.6" height="9.9" fill="#2dc42d"/>
<rect x="731.4" y="213.6" width="2.6" height="9.0" fill="#2dc42d"/>
<rect x="740.5" y="212.9" width="2.6" height="7.6" fill="#2dc42d"/>
<rect x="752.5" y="239.5" width="2.6" height="5.2" fill="#2dc42d"/>
<rect x="755.6" y="235.4" width="2.6" height="4.1" fill="#2dc42d"/>
<rect x="764.6" y="238.2" width="2.6" height="4.5" fill="#2dc42d"/>
<rect x="778.2" y="238.0" width="2.6" height="6.0" fill="#2dc42d"/>
<rect x="782.8" y="244.3" width="2.6" height="6.7" fill="#2dc42d"/>
<rect x="787.3" y="249.1" width="2.6" height="3.9" fill="#2dc42d"/>
<rect x="791.8" y="242.0" width="2.6" height="10.0" fill="#2dc42d"/>
<rect x="794.9" y="251.0" width="2.6" height="6.0" fill="#2dc42d"/>
<rect x="797.9" y="241.0" width="2.6" height="8.0" fill="#2dc42d"/>
<rect x="21.2" y="178.0" width="2.6" height="10.5" fill="#e0301e"/>
<rect x="22.7" y="188.0" width="2.6" height="4.5" fill="#e0301e"/>
<rect x="24.2" y="198.0" width="2.6" height="7.0" fill="#e0301e"/>
<rect x="30.3" y="186.0" width="2.6" height="6.2" fill="#e0301e"/>
<rect x="31.8" y="192.2" width="2.6" height="5.1" fill="#e0301e"/>
<rect x="36.3" y="188.0" width="2.6" height="5.7" fill="#e0301e"/>
<rect x="46.9" y="175.7" width="2.6" height="6.1" fill="#e0301e"/>
<rect x="60.5" y="161.8" width="2.6" height="8.1" fill="#e0301e"/>
<rect x="68.1" y="169.0" width="2.6" height="13.0" fill="#e0301e"/>
<rect x="78.6" y="171.6" width="2.6" height="7.2" fill="#e0301e"/>
<rect x="80.2" y="178.8" width="2.6" height="6.3" fill="#e0301e"/>
<rect x="81.7" y="185.1" width="2.6" height="8.4" fill="#e0301e"/>
<rect x="84.7" y="193.5" width="2.6" height="8.2" fill="#e0301e"/>
<rect x="87.7" y="192.1" width="2.6" height="8.0" fill="#e0301e"/>
<rect x="92.2" y="186.7" width="2.6" height="15.0" fill="#e0301e"/>
<rect x="98.3" y="201.8" width="2.6" height="7.1" fill="#e0301e"/>
<rect x="101.3" y="208.8" width="2.6" height="8.6" fill="#e0301e"/>
<rect x="104.3" y="217.4" width="2.6" height="4.3" fill="#e0301e"/>
<rect x="107.3" y="221.7" width="2.6" height="4.3" fill="#e0301e"/>
<rect x="113.4" y="217.5" width="2.6" height="7.4" fill="#e0301e"/>
<rect x="119.4" y="221.0" width="2.6" height="6.8" fill="#e0301e"/>
<rect x="122.5" y="224.3" width="2.6" height="4.9" fill="#e0301e"/>
<rect x="137.6" y="218.5" width="2.6" height="3.5" fill="#e0301e"/>
<rect x="142.1" y="222.0" width="2.6" height="2.4" fill="#e0301e"/>
<rect x="169.3" y="190.1" width="2.6" height="6.6" fill="#e0301e"/>
<rect x="173.8" y="190.6" width="2.6" height="2.8" fill="#e0301e"/>
<rect x="175.3" y="193.5" width="2.6" height="7.9" fill="#e0301e"/>
<rect x="178.4" y="191.8" width="2.6" height="19.4" fill="#e0301e"/>
<rect x="182.9" y="206.6" width="2.6" height="3.9" fill="#e0301e"/>
<rect x="184.4" y="210.5" width="2.6" height="3.0" fill="#e0301e"/>
<rect x="192.0" y="213.6" width="2.6" height="6.3" fill="#e0301e"/>
<rect x="208.6" y="211.4" width="2.6" height="4.8" fill="#e0301e"/>
<rect x="211.6" y="216.1" width="2.6" height="4.0" fill="#e0301e"/>
<rect x="222.2" y="200.4" width="2.6" height="3.8" fill="#e0301e"/>
<rect x="223.7" y="204.2" width="2.6" height="4.6" fill="#e0301e"/>
<rect x="225.2" y="208.8" width="2.6" height="6.5" fill="#e0301e"/>
<rect x="226.7" y="216.0" width="2.6" height="8.0" fill="#e0301e"/>
<rect x="228.2" y="220.0" width="2.6" height="6.0" fill="#e0301e"/>
<rect x="231.3" y="223.0" width="2.6" height="6.9" fill="#e0301e"/>
<rect x="244.8" y="170.0" width="2.6" height="5.8" fill="#e0301e"/>
<rect x="249.4" y="162.9" width="2.6" height="4.9" fill="#e0301e"/>
<rect x="252.4" y="160.0" width="2.6" height="9.4" fill="#e0301e"/>
<rect x="261.5" y="169.4" width="2.6" height="5.8" fill="#e0301e"/>
<rect x="266.0" y="175.2" width="2.6" height="5.1" fill="#e0301e"/>
<rect x="270.5" y="180.4" width="2.6" height="5.9" fill="#e0301e"/>
<rect x="272.0" y="186.2" width="2.6" height="3.7" fill="#e0301e"/>
<rect x="273.6" y="184.0" width="2.6" height="19.0" fill="#e0301e"/>
<rect x="276.6" y="191.9" width="2.6" height="9.9" fill="#e0301e"/>
<rect x="278.1" y="201.9" width="2.6" height="1.5" fill="#e0301e"/>
<rect x="288.7" y="187.7" width="2.6" height="1.7" fill="#e0301e"/>
<rect x="290.2" y="189.4" width="2.6" height="2.7" fill="#e0301e"/>
<rect x="291.7" y="192.0" width="2.6" height="2.0" fill="#e0301e"/>
<rect x="306.8" y="179.1" width="2.6" height="2.3" fill="#e0301e"/>
<rect x="312.8" y="181.3" width="2.6" height="1.5" fill="#e0301e"/>
<rect x="315.9" y="182.4" width="2.6" height="2.8" fill="#e0301e"/>
<rect x="320.4" y="182.9" width="2.6" height="5.1" fill="#e0301e"/>
<rect x="331.0" y="178.4" width="2.6" height="1.5" fill="#e0301e"/>
<rect x="335.5" y="179.6" width="2.6" height="4.0" fill="#e0301e"/>
<rect x="338.5" y="179.4" width="2.6" height="5.0" fill="#e0301e"/>
<rect x="356.7" y="178.2" width="2.6" height="2.7" fill="#e0301e"/>
<rect x="359.7" y="176.9" width="2.6" height="5.3" fill="#e0301e"/>
<rect x="373.3" y="168.7" width="2.6" height="5.2" fill="#e0301e"/>
<rect x="374.8" y="174.0" width="2.6" height="3.2" fill="#e0301e"/>
<rect x="394.4" y="172.1" width="2.6" height="4.1" fill="#e0301e"/>
<rect x="400.5" y="176.2" width="2.6" height="4.0" fill="#e0301e"/>
<rect x="402.0" y="180.2" width="2.6" height="5.8" fill="#e0301e"/>
<rect x="406.5" y="176.8" width="2.6" height="6.2" fill="#e0301e"/>
<rect x="418.6" y="164.4" width="2.6" height="1.8" fill="#e0301e"/>
<rect x="420.1" y="166.2" width="2.6" height="8.8" fill="#e0301e"/>
<rect x="421.6" y="175.0" width="2.6" height="1.5" fill="#e0301e"/>
<rect x="423.1" y="176.2" width="2.6" height="5.6" fill="#e0301e"/>
<rect x="427.7" y="181.8" width="2.6" height="4.8" fill="#e0301e"/>
<rect x="436.7" y="182.5" width="2.6" height="6.3" fill="#e0301e"/>
<rect x="439.8" y="178.9" width="2.6" height="6.3" fill="#e0301e"/>
<rect x="442.8" y="185.3" width="2.6" height="4.7" fill="#e0301e"/>
<rect x="451.9" y="185.8" width="2.6" height="3.2" fill="#e0301e"/>
<rect x="454.9" y="189.1" width="2.6" height="3.1" fill="#e0301e"/>
<rect x="460.9" y="192.2" width="2.6" height="6.7" fill="#e0301e"/>
<rect x="462.4" y="198.9" width="2.6" height="5.8" fill="#e0301e"/>
<rect x="463.9" y="204.6" width="2.6" height="5.6" fill="#e0301e"/>
<rect x="465.5" y="210.2" width="2.6" height="4.5" fill="#e0301e"/>
<rect x="467.0" y="214.7" width="2.6" height="9.0" fill="#e0301e"/>
<rect x="470.0" y="223.7" width="2.6" height="4.9" fill="#e0301e"/>
<rect x="473.0" y="228.5" width="2.6" height="8.7" fill="#e0301e"/>
<rect x="477.5" y="237.3" width="2.6" height="8.2" fill="#e0301e"/>
<rect x="488.1" y="218.2" width="2.6" height="4.5" fill="#e0301e"/>
<rect x="489.6" y="222.6" width="2.6" height="7.9" fill="#e0301e"/>
<rect x="491.1" y="230.5" width="2.6" height="6.4" fill="#e0301e"/>
<rect x="494.2" y="237.0" width="2.6" height="6.1" fill="#e0301e"/>
<rect x="504.7" y="219.1" width="2.6" height="11.1" fill="#e0301e"/>
<rect x="510.8" y="230.3" width="2.6" height="3.1" fill="#e0301e"/>
<rect x="513.8" y="233.3" width="2.6" height="6.5" fill="#e0301e"/>
<rect x="519.9" y="239.8" width="2.6" height="4.0" fill="#e0301e"/>
<rect x="521.4" y="243.9" width="2.6" height="5.0" fill="#e0301e"/>
<rect x="524.4" y="244.5" width="2.6" height="6.5" fill="#e0301e"/>
<rect x="527.4" y="245.4" width="2.6" height="6.8" fill="#e0301e"/>
<rect x="530.4" y="245.6" width="2.6" height="5.5" fill="#e0301e"/>
<rect x="539.5" y="247.2" width="2.6" height="7.1" fill="#e0301e"/>
<rect x="542.5" y="254.3" width="2.6" height="5.4" fill="#e0301e"/>
<rect x="556.1" y="242.0" width="2.6" height="5.8" fill="#e0301e"/>
<rect x="557.6" y="247.8" width="2.6" height="5.8" fill="#e0301e"/>
<rect x="559.1" y="253.6" width="2.6" height="11.3" fill="#e0301e"/>
<rect x="568.2" y="139.0" width="2.6" height="32.0" fill="#e0301e"/>
<rect x="572.7" y="112.0" width="2.6" height="10.0" fill="#e0301e"/>
<rect x="575.8" y="80.0" width="2.6" height="12.0" fill="#e0301e"/>
<rect x="578.8" y="63.0" width="2.6" height="10.0" fill="#e0301e"/>
<rect x="580.3" y="73.0" width="2.6" height="19.0" fill="#e0301e"/>
<rect x="581.8" y="89.0" width="2.6" height="38.0" fill="#e0301e"/>
<rect x="589.4" y="96.0" width="2.6" height="29.0" fill="#e0301e"/>
<rect x="590.9" y="121.0" width="2.6" height="13.0" fill="#e0301e"/>
<rect x="592.4" y="136.0" width="2.6" height="6.0" fill="#e0301e"/>
<rect x="596.9" y="117.0" width="2.6" height="3.0" fill="#e0301e"/>
<rect x="598.4" y="136.0" width="2.6" height="6.5" fill="#e0301e"/>
<rect x="601.4" y="120.0" width="2.6" height="4.0" fill="#e0301e"/>
<rect x="604.5" y="113.0" width="2.6" height="4.0" fill="#e0301e"/>
<rect x="606.0" y="117.0" width="2.6" height="3.5" fill="#e0301e"/>
<rect x="609.0" y="115.0" width="2.6" height="10.0" fill="#e0301e"/>
<rect x="613.5" y="121.0" width="2.6" height="4.4" fill="#e0301e"/>
<rect x="616.6" y="122.5" width="2.6" height="10.0" fill="#e0301e"/>
<rect x="618.1" y="132.5" width="2.6" height="5.3" fill="#e0301e"/>
<rect x="619.6" y="128.8" width="2.6" height="35.0" fill="#e0301e"/>
<rect x="634.7" y="118.0" width="2.6" height="4.0" fill="#e0301e"/>
<rect x="642.2" y="136.0" width="2.6" height="3.0" fill="#e0301e"/>
<rect x="643.8" y="139.0" width="2.6" height="18.5" fill="#e0301e"/>
<rect x="645.3" y="137.0" width="2.6" height="54.0" fill="#e0301e"/>
<rect x="648.3" y="176.0" width="2.6" height="10.9" fill="#e0301e"/>
<rect x="651.3" y="186.0" width="2.6" height="8.9" fill="#e0301e"/>
<rect x="652.8" y="190.0" width="2.6" height="22.0" fill="#e0301e"/>
<rect x="657.4" y="203.0" width="2.6" height="10.0" fill="#e0301e"/>
<rect x="660.4" y="195.9" width="2.6" height="3.4" fill="#e0301e"/>
<rect x="661.9" y="197.0" width="2.6" height="17.0" fill="#e0301e"/>
<rect x="669.4" y="202.0" width="2.6" height="15.0" fill="#e0301e"/>
<rect x="672.5" y="201.3" width="2.6" height="8.1" fill="#e0301e"/>
<rect x="674.0" y="209.4" width="2.6" height="5.8" fill="#e0301e"/>
<rect x="680.0" y="210.8" width="2.6" height="9.5" fill="#e0301e"/>
<rect x="683.0" y="205.7" width="2.6" height="9.7" fill="#e0301e"/>
<rect x="693.6" y="215.4" width="2.6" height="3.4" fill="#e0301e"/>
<rect x="696.6" y="211.9" width="2.6" height="10.5" fill="#e0301e"/>
<rect x="719.3" y="210.6" width="2.6" height="7.5" fill="#e0301e"/>
<rect x="720.8" y="218.1" width="2.6" height="1.5" fill="#e0301e"/>
<rect x="722.3" y="218.7" width="2.6" height="6.9" fill="#e0301e"/>
<rect x="723.8" y="225.6" width="2.6" height="4.2" fill="#e0301e"/>
<rect x="726.9" y="226.0" width="2.6" height="6.5" fill="#e0301e"/>
<rect x="737.4" y="213.6" width="2.6" height="6.9" fill="#e0301e"/>
<rect x="742.0" y="212.9" width="2.6" height="18.9" fill="#e0301e"/>
<rect x="746.5" y="231.8" width="2.6" height="8.0" fill="#e0301e"/>
<rect x="749.5" y="239.8" width="2.6" height="5.0" fill="#e0301e"/>
<rect x="757.1" y="235.4" width="2.6" height="2.6" fill="#e0301e"/>
<rect x="760.1" y="238.0" width="2.6" height="4.7" fill="#e0301e"/>
<rect x="769.2" y="238.2" width="2.6" height="2.3" fill="#e0301e"/>
<rect x="776.7" y="241.0" width="2.6" height="7.0" fill="#e0301e"/>
<rect x="779.7" y="238.0" width="2.6" height="8.1" fill="#e0301e"/>
<rect x="781.3" y="242.0" width="2.6" height="9.0" fill="#e0301e"/>
<rect x="784.3" y="244.3" width="2.6" height="4.6" fill="#e0301e"/>
<rect x="785.8" y="247.0" width="2.6" height="6.0" fill="#e0301e"/>
<rect x="788.8" y="248.0" width="2.6" height="6.0" fill="#e0301e"/>
<rect x="793.3" y="252.0" width="2.6" height="7.0" fill="#e0301e"/>
<rect x="796.4" y="246.0" width="2.6" height="4.0" fill="#e0301e"/>
<rect x="799.4" y="241.0" width="2.6" height="7.6" fill="#e0301e"/>
<rect x="722.8" y="192.5" width="3" height="50.5" fill="#e0301e"/>
<rect x="34.6" y="186.3" width="3" height="0.8" fill="#444"/>
<rect x="42.2" y="184.7" width="3" height="0.8" fill="#444"/>
<rect x="54.3" y="172.3" width="3" height="0.8" fill="#444"/>
<rect x="63.3" y="171.0" width="3" height="0.8" fill="#444"/>
<rect x="72.4" y="172.2" width="3" height="0.8" fill="#444"/>
<rect x="75.4" y="170.2" width="3" height="0.8" fill="#444"/>
<rect x="76.9" y="173.3" width="3" height="0.8" fill="#444"/>
<rect x="95.1" y="201.8" width="3" height="0.8" fill="#444"/>
<rect x="99.6" y="207.0" width="3" height="0.8" fill="#444"/>
<rect x="102.6" y="216.8" width="3" height="0.8" fill="#444"/>
<rect x="108.7" y="225.3" width="3" height="0.8" fill="#444"/>
<rect x="117.7" y="223.0" width="3" height="0.8" fill="#444"/>
<rect x="125.3" y="229.4" width="3" height="0.8" fill="#444"/>
<rect x="131.3" y="222.4" width="3" height="0.8" fill="#444"/>
<rect x="147.9" y="220.7" width="3" height="0.8" fill="#444"/>
<rect x="166.1" y="195.4" width="3" height="0.8" fill="#444"/>
<rect x="172.1" y="192.4" width="3" height="0.8" fill="#444"/>
<rect x="190.3" y="213.8" width="3" height="0.8" fill="#444"/>
<rect x="197.8" y="212.3" width="3" height="0.8" fill="#444"/>
<rect x="199.3" y="213.2" width="3" height="0.8" fill="#444"/>
<rect x="200.8" y="209.4" width="3" height="0.8" fill="#444"/>
<rect x="205.4" y="209.8" width="3" height="0.8" fill="#444"/>
<rect x="206.9" y="211.4" width="3" height="0.8" fill="#444"/>
<rect x="209.9" y="216.3" width="3" height="0.8" fill="#444"/>
<rect x="247.7" y="164.2" width="3" height="0.8" fill="#444"/>
<rect x="253.7" y="170.6" width="3" height="0.8" fill="#444"/>
<rect x="259.8" y="168.7" width="3" height="0.8" fill="#444"/>
<rect x="264.3" y="176.3" width="3" height="0.8" fill="#444"/>
<rect x="279.4" y="202.7" width="3" height="0.8" fill="#444"/>
<rect x="294.5" y="189.5" width="3" height="0.8" fill="#444"/>
<rect x="308.1" y="180.1" width="3" height="0.8" fill="#444"/>
<rect x="309.6" y="183.0" width="3" height="0.8" fill="#444"/>
<rect x="321.7" y="188.1" width="3" height="0.8" fill="#444"/>
<rect x="323.2" y="186.5" width="3" height="0.8" fill="#444"/>
<rect x="341.4" y="184.6" width="3" height="0.8" fill="#444"/>
<rect x="348.9" y="176.3" width="3" height="0.8" fill="#444"/>
<rect x="353.4" y="178.8" width="3" height="0.8" fill="#444"/>
<rect x="362.5" y="179.4" width="3" height="0.8" fill="#444"/>
<rect x="365.5" y="176.0" width="3" height="0.8" fill="#444"/>
<rect x="371.6" y="166.8" width="3" height="0.8" fill="#444"/>
<rect x="380.6" y="176.0" width="3" height="0.8" fill="#444"/>
<rect x="383.7" y="170.8" width="3" height="0.8" fill="#444"/>
<rect x="386.7" y="171.4" width="3" height="0.8" fill="#444"/>
<rect x="388.2" y="173.8" width="3" height="0.8" fill="#444"/>
<rect x="404.8" y="178.0" width="3" height="0.8" fill="#444"/>
<rect x="410.9" y="174.5" width="3" height="0.8" fill="#444"/>
<rect x="426.0" y="183.2" width="3" height="0.8" fill="#444"/>
<rect x="430.5" y="186.8" width="3" height="0.8" fill="#444"/>
<rect x="441.1" y="184.2" width="3" height="0.8" fill="#444"/>
<rect x="453.2" y="190.5" width="3" height="0.8" fill="#444"/>
<rect x="457.7" y="192.1" width="3" height="0.8" fill="#444"/>
<rect x="459.2" y="191.0" width="3" height="0.8" fill="#444"/>
<rect x="475.8" y="235.4" width="3" height="0.8" fill="#444"/>
<rect x="478.9" y="244.5" width="3" height="0.8" fill="#444"/>
<rect x="480.4" y="246.9" width="3" height="0.8" fill="#444"/>
<rect x="481.9" y="244.4" width="3" height="0.8" fill="#444"/>
<rect x="492.5" y="236.5" width="3" height="0.8" fill="#444"/>
<rect x="497.0" y="234.9" width="3" height="0.8" fill="#444"/>
<rect x="506.1" y="231.3" width="3" height="0.8" fill="#444"/>
<rect x="507.6" y="229.6" width="3" height="0.8" fill="#444"/>
<rect x="546.8" y="261.5" width="3" height="0.8" fill="#444"/>
<rect x="554.4" y="243.3" width="3" height="0.8" fill="#444"/>
<rect x="628.4" y="134.0" width="3" height="0.8" fill="#444"/>
<rect x="675.3" y="213.7" width="3" height="0.8" fill="#444"/>
<rect x="687.4" y="213.9" width="3" height="0.8" fill="#444"/>
<rect x="691.9" y="214.4" width="3" height="0.8" fill="#444"/>
<rect x="697.9" y="221.4" width="3" height="0.8" fill="#444"/>
<rect x="699.5" y="221.4" width="3" height="0.8" fill="#444"/>
<rect x="708.5" y="221.0" width="3" height="0.8" fill="#444"/>
<rect x="710.0" y="221.0" width="3" height="0.8" fill="#444"/>
<rect x="716.1" y="212.0" width="3" height="0.8" fill="#444"/>
<rect x="729.7" y="222.7" width="3" height="0.8" fill="#444"/>
<rect x="734.2" y="212.2" width="3" height="0.8" fill="#444"/>
<rect x="743.3" y="232.7" width="3" height="0.8" fill="#444"/>
<rect x="750.8" y="243.9" width="3" height="0.8" fill="#444"/>
<rect x="753.9" y="238.9" width="3" height="0.8" fill="#444"/>
<rect x="758.4" y="239.0" width="3" height="0.8" fill="#444"/>
<rect x="765.9" y="236.7" width="3" height="0.8" fill="#444"/>
<rect x="772.0" y="241.9" width="3" height="0.8" fill="#444"/>
<rect x="800.7" y="247.8" width="3" height="0.8" fill="#444"/>
</g>
<line x1="19" y1="214.5" x2="98" y2="214.5" stroke="#f01010" stroke-width="1.25" stroke-dasharray="4.5,3.6"/>
<line x1="105.6" y1="200.5" x2="168" y2="200.5" stroke="#f01010" stroke-width="1.25" stroke-dasharray="4.5,3.6"/>
<line x1="176" y1="198.5" x2="240" y2="198.5" stroke="#f01010" stroke-width="1.25" stroke-dasharray="4.5,3.6"/>
<line x1="265.5" y1="170.5" x2="333" y2="170.5" stroke="#f01010" stroke-width="1.25" stroke-dasharray="4.5,3.6"/>
<line x1="371" y1="182.5" x2="408" y2="182.5" stroke="#f01010" stroke-width="1.25" stroke-dasharray="4.5,3.6"/>
<line x1="428" y1="172.5" x2="488" y2="172.5" stroke="#f01010" stroke-width="1.25" stroke-dasharray="4.5,3.6"/>
<line x1="485.75" y1="223.5" x2="567" y2="223.5" stroke="#f01010" stroke-width="1.25" stroke-dasharray="4.5,3.6"/>
<line x1="567" y1="253.5" x2="645" y2="253.5" stroke="#f01010" stroke-width="1.25" stroke-dasharray="4.5,3.6"/>
<line x1="642.5" y1="132.5" x2="723.5" y2="132.5" stroke="#f01010" stroke-width="1.25" stroke-dasharray="4.5,3.6"/>
<line x1="726" y1="208.5" x2="801" y2="208.5" stroke="#f01010" stroke-width="1.25" stroke-dasharray="4.5,3.6"/>
<polyline points="19.00,233.00 21.00,219.50 37.75,218.75 40.25,207.50 44.00,201.00 49.00,195.00 54.00,190.00 55.25,188.25 60.25,188.25 61.50,184.50 76.50,184.50" fill="none" stroke="#1a9a1a" stroke-width="1.2"/>
<polyline points="150.00,222.00 150.50,220.00 162.00,217.50 164.75,208.75 169.75,205.00 173.50,203.75 177.00,200.00" fill="none" stroke="#1a9a1a" stroke-width="1.2"/>
<polyline points="218.00,230.00 220.00,217.50 222.00,213.00 233.00,213.00 235.00,222.00 237.00,225.60 239.40,222.50 241.25,212.50 243.75,201.00 247.00,190.00 272.50,188.75" fill="none" stroke="#1a9a1a" stroke-width="1.2"/>
<polyline points="335.50,189.50 343.00,189.50" fill="none" stroke="#1a9a1a" stroke-width="1.2"/>
<polyline points="409.00,182.50 423.00,182.50" fill="none" stroke="#1a9a1a" stroke-width="1.2"/>
<polyline points="307.50,187.25 318.75,187.25" fill="none" stroke="#1a9a1a" stroke-width="1.2"/>
<polyline points="348.75,180.00 355.00,179.50" fill="none" stroke="#1a9a1a" stroke-width="1.2"/>
<polyline points="485.75,262.50 487.00,248.00 517.00,248.00" fill="none" stroke="#1a9a1a" stroke-width="1.2"/>
<polyline points="550.00,268.00 553.25,265.00 559.50,262.50 565.00,261.25 565.75,252.50 567.00,222.50 572.00,190.00 575.75,165.00 576.50,147.50 619.50,147.50" fill="none" stroke="#1a9a1a" stroke-width="1.2"/>
<polyline points="227.50,202.00 230.00,206.00 232.50,210.00 235.00,210.60" fill="none" stroke="#c01414" stroke-width="1.2"/>
<polyline points="78.50,158.75 81.50,161.00 84.00,172.50 89.00,182.50 96.50,185.00 100.25,186.25 102.75,192.50 106.50,200.00 110.25,202.50 116.50,203.00 121.50,210.00 129.00,213.75 139.00,213.75 149.00,216.25 154.00,217.50" fill="none" stroke="#c01414" stroke-width="1.2"/>
<polyline points="177.75,183.75 184.00,188.75 189.00,192.50 194.00,193.75 199.00,196.25 204.00,198.00 211.50,203.75 216.50,205.50" fill="none" stroke="#c01414" stroke-width="1.2"/>
<polyline points="274.25,166.25 276.00,170.00 278.00,173.00 283.00,173.75 286.00,177.50 288.00,178.50 330.00,178.50" fill="none" stroke="#c01414" stroke-width="1.2"/>
<polyline points="343.00,165.75 355.50,165.75 360.50,168.75 365.50,171.25" fill="none" stroke="#c01414" stroke-width="1.2"/>
<polyline points="377.50,158.75 384.25,159.50 389.40,163.75 400.00,165.00 402.50,171.25 407.00,173.75 412.00,174.00" fill="none" stroke="#c01414" stroke-width="1.2"/>
<polyline points="424.25,162.50 428.00,171.25 441.75,172.50 448.25,173.75 449.50,180.00 462.00,181.25 465.75,190.00 469.50,200.00 474.50,207.50 479.50,215.00 484.50,223.75 492.00,225.00 495.75,233.75 502.00,236.25 524.50,233.75 529.50,238.75 537.00,242.50 544.50,247.50 549.50,251.25" fill="none" stroke="#c01414" stroke-width="1.2"/>
<polyline points="621.25,106.00 623.75,116.00 646.25,116.00 647.50,131.00 651.25,142.25 660.00,143.50 662.50,146.00 676.25,146.00 677.50,147.50 680.00,157.50 685.00,165.00 686.25,176.25 693.75,178.75 695.00,190.00 707.50,190.75 712.50,194.50 724.25,195.50 726.25,205.50 742.50,205.50 746.25,215.00 750.00,226.25 770.00,227.00 775.00,228.75 786.25,230.50 791.25,236.25 801.25,237.00" fill="none" stroke="#c01414" stroke-width="1.2"/>
<polyline points="19.00,208.00 20.50,197.00 23.00,193.00 27.00,192.50 32.00,192.00 40.00,191.00 48.00,190.00 55.25,186.00 64.00,184.50 76.50,183.00 89.00,183.00 99.00,185.00 114.00,189.50 126.50,193.75 139.00,197.00 151.50,199.50 164.00,200.00 176.50,199.50 189.00,201.25 201.50,204.50 214.00,207.50 228.00,210.50 235.50,212.50 243.00,212.50 253.00,209.50 265.50,205.50 278.00,202.50 290.50,200.00 303.00,197.50 315.50,194.50 328.00,192.00 340.50,189.50 353.00,187.00 365.50,185.00 378.00,182.50 388.00,180.00 398.00,179.50 408.00,179.50 418.00,178.75 428.00,178.75 435.50,180.00 442.00,179.50 452.00,179.50 462.00,180.50 472.00,183.00 482.00,186.25 492.00,190.00 504.50,194.50 517.00,199.50 529.50,205.50 542.00,211.25 554.50,217.50 564.50,222.00 568.25,223.00 574.50,219.50 582.00,215.00 592.00,210.00 604.50,205.50 617.00,198.75 629.50,192.50 642.00,183.75 650.00,180.00 662.50,177.00 675.00,174.50 687.50,171.25 700.00,168.75 710.00,167.00 716.25,166.25 722.50,170.00 730.00,177.50 740.00,183.00 750.00,190.00 756.25,195.00 762.50,200.60 768.75,205.60 775.00,208.75 781.25,213.75 787.50,218.75 793.75,223.75 797.50,225.60 801.00,226.50" fill="none" stroke="#1fc01f" stroke-width="1.2" stroke-linejoin="round"/>
<polyline points="19.50,208.00 21.01,193.00 22.52,193.04 24.03,192.77 25.54,192.37 27.05,191.99 28.57,191.83 30.08,191.81 31.59,191.89 33.10,192.01 34.61,192.04 36.12,192.01 37.63,191.95 39.14,191.88 40.65,191.68 42.16,191.36 43.68,190.91 45.19,190.33 46.70,189.63 48.21,188.94 49.72,187.29 51.23,187.07 52.74,186.06 54.25,185.09 55.76,184.14 57.27,183.19 58.79,182.17 60.30,181.09 61.81,179.98 63.32,178.83 64.83,177.75 66.34,176.74 67.85,175.80 69.36,174.91 70.87,174.14 72.38,173.49 73.90,172.98 75.41,172.62 76.92,172.50 78.43,172.47 79.94,172.68 81.45,173.24 82.96,174.09 84.47,175.18 85.98,176.45 87.49,177.77 89.01,179.17 90.52,180.55 92.03,181.89 93.54,183.20 95.05,184.53 96.56,185.92 98.07,187.38 99.58,189.04 101.09,190.94 102.60,193.02 104.12,195.28 105.63,197.71 107.14,200.10 108.65,202.49 110.16,204.69 111.67,206.55 113.18,208.12 114.69,209.43 116.20,210.61 117.71,211.84 119.23,213.09 120.74,214.44 122.25,215.86 123.76,217.34 125.27,218.77 126.78,220.13 128.29,221.37 129.80,222.30 131.31,222.92 132.82,223.28 134.34,223.41 135.85,223.33 137.36,223.26 138.87,223.18 140.38,223.14 141.89,223.17 143.40,223.25 144.91,223.33 146.42,223.36 147.94,223.31 149.45,223.15 150.96,222.83 152.47,222.37 153.98,221.81 155.49,221.14 157.00,220.33 158.51,219.41 160.02,218.43 161.53,217.39 163.04,216.31 164.56,215.16 166.07,213.96 167.58,212.66 169.09,211.27 170.60,209.79 172.11,208.34 173.62,206.92 175.13,205.56 176.64,204.33 178.16,203.23 179.67,202.27 181.18,201.54 182.69,201.06 184.20,200.83 185.71,200.82 187.22,200.93 188.73,201.17 190.24,201.55 191.75,202.01 193.26,202.56 194.78,203.20 196.29,203.91 197.80,204.63 199.31,205.44 200.82,206.31 202.33,207.15 203.84,207.95 205.35,208.73 206.86,209.47 208.38,210.18 209.89,210.87 211.40,211.48 212.91,212.01 214.42,212.32 215.93,212.37 217.44,212.29 218.95,212.07 220.46,211.71 221.97,211.24 223.48,210.99 225.00,210.96 226.51,211.16 228.02,211.60 229.53,212.18 231.04,212.91 232.55,213.62 234.06,214.28 235.57,214.59 237.08,214.42 238.59,213.65 240.11,212.47 241.62,210.94 243.13,209.13 244.64,207.16 246.15,205.11 247.66,203.11 249.17,201.10 250.68,199.19 252.19,197.39 253.70,195.42 255.22,193.37 256.73,191.23 258.24,188.90 259.75,186.43 261.26,183.79 262.77,181.19 264.28,178.71 265.79,176.61 267.30,174.99 268.81,174.00 270.33,173.43 271.84,173.33 273.35,173.68 274.86,174.43 276.37,175.49 277.88,176.78 279.39,178.24 280.90,179.78 282.41,181.34 283.92,182.77 285.44,183.99 286.95,185.04 288.46,186.00 289.97,186.95 291.48,187.95 292.99,188.97 294.50,189.89 296.01,190.70 297.52,191.40 299.03,191.96 300.55,192.36 302.06,192.53 303.57,192.43 305.08,192.09 306.59,191.57 308.10,190.91 309.61,190.17 311.12,189.37 312.63,188.57 314.14,187.89 315.66,187.33 317.17,186.84 318.68,186.41 320.19,186.03 321.70,185.67 323.21,185.33 324.72,185.08 326.23,184.80 327.74,184.49 329.25,184.14 330.77,183.83 332.28,183.54 333.79,183.28 335.30,183.10 336.81,183.04 338.32,183.04 339.83,183.11 341.34,183.23 342.85,183.38 344.36,183.55 345.88,183.64 347.39,183.66 348.90,183.60 350.41,183.47 351.92,183.23 353.43,182.89 354.94,182.48 356.45,182.19 357.96,181.99 359.47,181.90 360.99,181.84 362.50,181.74 364.01,181.61 365.52,181.42 367.03,181.12 368.54,180.69 370.05,180.15 371.56,179.50 373.07,178.85 374.58,178.24 376.10,177.76 377.61,177.39 379.12,177.07 380.63,176.77 382.14,176.47 383.65,176.20 385.16,175.92 386.67,175.61 388.18,175.26 389.69,174.87 391.21,174.45 392.72,174.11 394.23,173.87 395.74,173.72 397.25,173.67 398.76,173.74 400.27,173.92 401.78,174.21 403.29,174.50 404.80,174.73 406.32,174.79 407.83,174.74 409.34,174.61 410.85,174.44 412.36,174.22 413.87,173.94 415.38,173.58 416.89,173.24 418.40,172.94 419.91,172.73 421.43,172.71 422.94,172.84 424.45,173.07 425.96,173.35 427.47,173.68 428.98,174.07 430.49,174.48 432.00,174.90 433.51,175.33 435.02,175.74 436.54,176.17 438.05,176.61 439.56,177.18 441.07,177.87 442.58,178.71 444.09,179.69 445.60,180.76 447.11,181.79 448.62,182.75 450.13,183.61 451.65,184.32 453.16,184.97 454.67,185.54 456.18,186.09 457.69,186.66 459.20,187.22 460.71,187.81 462.22,188.60 463.73,189.60 465.24,190.87 466.76,192.51 468.27,194.52 469.78,196.64 471.29,198.83 472.80,201.10 474.31,203.43 475.82,205.88 477.33,208.52 478.84,211.37 480.35,214.31 481.87,217.15 483.38,219.84 484.89,222.23 486.40,224.31 487.91,226.05 489.42,227.76 490.93,229.58 492.44,231.36 493.95,232.98 495.46,234.23 496.98,235.11 498.49,235.61 500.00,235.91 501.51,236.02 503.02,235.93 504.53,235.64 506.04,235.17 507.55,234.63 509.06,233.98 510.57,233.34 512.09,232.90 513.60,232.66 515.11,232.77 516.62,233.20 518.13,233.87 519.64,234.50 521.15,234.96 522.66,235.28 524.17,235.56 525.68,236.00 527.20,236.59 528.71,237.31 530.22,238.13 531.73,239.03 533.24,240.03 534.75,241.12 536.26,242.31 537.77,243.48 539.28,244.64 540.79,245.80 542.31,246.90 543.82,247.92 545.33,248.84 546.84,249.74 548.35,250.52 549.86,251.16 551.37,251.64 552.88,251.90 554.39,251.95 555.90,251.80 557.42,251.68 558.93,251.64 560.44,251.76 561.95,251.45 563.46,250.43 564.97,248.18 566.48,244.69 567.99,240.05 569.50,234.62 571.01,228.37 572.53,221.24 574.04,213.37 575.55,204.84 577.06,195.92 581.25,165.75 585.00,146.00 590.00,126.00 595.00,113.50 598.75,109.75 603.75,112.25 608.75,117.25 615.00,119.75 620.00,121.00 625.00,126.00 631.25,131.00 637.50,132.25 643.75,136.00 648.75,143.50 655.00,161.00 658.65,159.74 660.16,162.98 661.67,166.55 663.19,170.13 664.70,173.83 666.21,177.61 667.72,181.38 669.23,185.17 670.74,188.75 672.25,192.14 673.76,195.22 675.27,197.88 676.78,200.06 678.30,201.75 679.81,203.11 681.32,204.26 682.83,205.25 684.34,206.09 685.85,206.92 687.36,207.70 688.87,208.44 690.38,209.19 691.89,209.98 693.41,210.84 694.92,211.69 696.43,212.49 697.94,213.23 699.45,213.91 700.96,214.54 702.47,215.11 703.98,215.62 705.49,216.07 707.00,216.48 708.52,216.92 710.03,217.41 711.54,217.94 713.05,218.49 714.56,218.92 716.07,219.20 717.58,219.33 719.09,219.34 720.60,219.49 722.12,219.74 723.63,220.07 725.14,220.48 726.65,220.98 728.16,221.45 729.67,221.67 731.18,221.69 732.69,221.52 734.20,221.31 735.71,221.05 737.22,220.84 738.74,220.72 740.25,220.69 741.76,220.72 743.27,220.91 744.78,221.36 746.29,222.07 747.80,223.01 749.31,224.16 750.82,225.27 752.33,226.24 753.85,226.99 755.36,227.53 756.87,227.89 758.38,228.28 759.89,228.92 761.40,229.82 762.91,230.92 764.42,232.06 765.93,233.23 767.44,234.36 768.96,235.38 770.47,236.31 771.98,237.17 773.49,237.90 775.00,238.50 776.51,238.98 778.02,239.39 779.53,239.73 781.04,239.99 782.55,240.28 784.07,240.70 785.58,241.25 787.09,241.90 788.60,242.57 790.11,243.26 791.62,243.96 793.13,244.72 794.64,245.46 796.15,246.07 797.66,246.55 799.18,247.03 800.69,247.50 802.20,247.94" fill="none" stroke="#f01818" stroke-width="1.1" stroke-linejoin="round"/>
<polyline points="19.00,208.00 22.00,191.00 25.25,193.00 30.25,190.60 36.50,192.50 42.75,190.00 46.50,185.00 50.25,178.00 55.25,173.75 62.75,170.60 67.75,170.60 72.75,173.00 79.00,174.40 82.75,178.00 85.90,187.50 89.00,195.00 92.75,197.50 97.75,197.50 101.50,202.50 105.25,212.50 109.00,220.00 112.75,222.50 119.00,221.00 125.25,225.00 131.50,226.00 139.00,221.00 146.50,222.50 152.75,220.00 159.00,212.50 164.00,205.00 169.00,197.50 174.00,193.75 179.00,196.00 184.00,202.50 189.00,211.00 194.00,212.50 201.50,210.00 209.00,211.00 213.00,214.00 217.00,216.00 221.00,211.00 225.60,206.00 229.00,212.00 232.00,218.00 235.00,222.00 238.00,219.00 240.50,208.00 242.50,197.00 245.50,186.00 249.25,175.00 253.00,169.50 256.75,168.00 260.50,171.25 265.50,172.50 270.50,176.25 274.25,181.25 278.00,190.00 281.75,195.50 285.50,197.50 289.25,193.75 293.00,191.25 296.75,192.50 303.00,188.75 310.50,183.75 315.50,182.50 323.00,183.00 328.00,186.25 333.00,182.50 338.00,181.25 343.00,183.75 348.00,185.00 353.00,181.25 358.00,179.50 364.25,180.00 370.50,176.25 375.50,172.50 380.50,175.00 388.00,173.75 395.50,172.50 403.00,176.25 408.00,177.50 413.00,172.50 419.25,167.50 423.00,168.75 428.00,177.50 433.00,183.75 438.00,186.25 442.00,183.75 448.25,187.50 454.50,186.25 459.50,191.25 464.50,198.75 468.25,210.00 472.00,222.50 477.00,232.50 483.25,242.50 487.00,240.00 492.00,230.00 497.00,237.50 503.25,232.50 509.50,228.75 514.50,232.50 519.50,240.00 524.50,242.50 532.00,247.50 539.50,251.25 547.00,256.25 550.75,257.50 554.50,252.50 559.50,243.75 564.50,242.50 567.00,222.50 569.50,190.00 571.25,165.75 573.75,141.00 576.25,116.00 578.75,96.00 581.25,85.50 583.75,88.50 586.25,96.00 590.00,106.00 593.75,118.50 597.50,131.00 600.50,137.25 603.75,128.50 607.50,122.25 612.50,121.00 617.50,123.50 621.25,131.00 625.00,143.50 628.00,153.50 631.25,143.50 635.00,131.00 638.75,128.50 642.50,133.50 646.25,146.00 648.75,160.00 651.25,175.00 653.75,185.00 657.50,193.75 662.50,198.75 667.50,200.00 672.50,206.25 680.00,212.50 687.50,212.50 695.00,215.00 702.50,220.00 710.00,221.25 716.25,222.50 722.50,216.25 726.25,221.25 731.25,227.50 736.25,218.75 740.00,217.50 745.00,223.75 750.00,232.50 755.00,238.75 760.00,236.25 765.00,238.75 772.50,240.00 780.00,242.50 787.50,246.25 793.75,251.25 797.50,253.75 801.25,250.00" fill="none" stroke="#2a2af0" stroke-width="1.1" stroke-linejoin="round"/>
<polyline points="19.50,208.00 21.01,193.00 22.52,193.04 24.03,192.77 25.54,192.37 27.05,191.99 28.57,191.83 30.08,191.81 31.59,191.89 33.10,192.01 34.61,192.04 36.12,192.01 37.63,191.95 39.14,191.88 40.65,190.51 42.16,191.13 43.68,190.46 45.19,189.63 46.70,188.65 48.21,187.64 49.72,186.50 51.23,185.21 52.74,183.81 54.25,182.34 55.76,180.88 57.27,179.41 58.79,177.92 60.30,176.43 61.81,175.10 63.32,173.93 64.83,172.99 66.34,172.35 67.85,172.03 69.36,171.83 70.87,171.73 72.38,171.73 73.90,171.77 75.41,171.82 76.92,172.01 78.43,172.33 79.94,172.94 81.45,173.98 82.96,175.39 84.47,177.12 85.98,179.02 87.49,180.89 89.01,182.74 90.52,184.49 92.03,186.18 93.54,187.80 95.05,189.49 96.56,191.35 98.07,193.29 99.58,195.50 101.09,197.82 102.60,199.99 104.12,202.04 105.63,204.00 107.14,205.80 108.65,207.63 110.16,209.39 111.67,211.13 113.18,212.86 114.69,214.59 116.20,216.27 117.71,217.91 119.23,219.47 120.74,220.77 122.25,221.78 123.76,222.53 125.27,223.05 126.78,223.39 128.29,223.68 129.80,223.81 131.31,223.87 132.82,223.89 134.34,223.88 135.85,223.87 137.36,223.88 138.87,223.83 140.38,223.74 141.89,223.60 143.40,223.41 144.91,223.15 146.42,222.83 147.94,222.45 149.45,222.01 150.96,221.52 152.47,220.99 153.98,220.42 155.49,219.82 157.00,219.10 158.51,218.17 160.02,217.02 161.53,215.67 163.04,214.09 164.56,212.33 166.07,210.48 167.58,208.59 169.09,206.64 170.60,204.66 172.11,202.90 173.62,201.33 175.13,199.94 176.64,198.82 178.16,198.02 179.67,197.53 181.18,197.40 182.69,197.65 184.20,198.30 185.71,199.32 187.22,200.49 188.73,201.74 190.24,203.13 191.75,204.55 193.26,205.84 194.78,207.03 196.29,208.12 197.80,209.02 199.31,209.79 200.82,210.44 202.33,210.91 203.84,211.18 205.35,211.22 206.86,211.18 208.38,211.24 209.89,211.39 211.40,211.59 212.91,211.94 214.42,212.24 215.93,212.42 217.44,212.46 218.95,212.37 220.46,212.09 221.97,211.58 223.48,211.33 225.00,211.32 226.51,211.60 228.02,212.07 229.53,212.64 231.04,213.36 232.55,213.97 234.06,214.41 235.57,214.47 237.08,214.10 238.59,213.18 240.11,211.96 241.62,210.50 243.13,208.93 244.64,206.76 246.15,204.06 247.66,200.95 249.17,197.37 250.68,193.53 252.19,189.41 253.70,185.33 255.22,181.47 256.73,178.22 258.24,175.62 259.75,173.76 261.26,172.38 262.77,171.46 264.28,170.95 265.79,170.83 267.30,171.07 268.81,171.60 270.33,172.43 271.84,173.57 273.35,175.05 274.86,176.78 276.37,178.52 277.88,180.31 279.39,182.14 280.90,184.03 282.41,185.92 283.92,187.59 285.44,189.01 286.95,190.26 288.46,191.34 289.97,192.26 291.48,193.12 292.99,193.80 294.50,194.11 296.01,194.08 297.52,193.81 299.03,193.28 300.55,192.60 302.06,191.78 303.57,190.89 305.08,190.09 306.59,189.35 308.10,188.69 309.61,188.10 311.12,187.50 312.63,186.80 314.14,186.04 315.66,185.35 317.17,184.74 318.68,184.20 320.19,183.79 321.70,183.56 323.21,183.51 324.72,183.61 326.23,183.66 327.74,183.68 329.25,183.61 330.77,183.54 332.28,183.45 333.79,183.34 335.30,183.25 336.81,183.23 338.32,183.27 339.83,183.39 341.34,183.49 342.85,183.53 344.36,183.51 345.88,183.30 347.39,183.12 348.90,182.94 350.41,182.82 351.92,182.71 353.43,182.58 354.94,182.47 356.45,182.35 357.96,182.19 359.47,181.98 360.99,181.71 362.50,181.33 364.01,180.83 365.52,180.20 367.03,179.61 368.54,179.04 370.05,178.46 371.56,177.82 373.07,177.27 374.58,176.86 376.10,176.56 377.61,176.26 379.12,175.91 380.63,175.49 382.14,175.04 383.65,174.66 385.16,174.33 386.67,174.05 388.18,173.82 389.69,173.66 391.21,173.58 392.72,173.63 394.23,173.70 395.74,173.75 397.25,173.77 398.76,173.83 400.27,173.97 401.78,174.17 403.29,174.46 404.80,174.77 406.32,174.95 407.83,175.02 409.34,174.98 410.85,174.88 412.36,174.71 413.87,174.42 415.38,173.92 416.89,173.36 418.40,172.77 419.91,172.21 421.43,171.84 422.94,171.66 424.45,171.65 425.96,171.78 427.47,172.18 428.98,172.88 430.49,173.78 432.00,174.83 433.51,176.04 435.02,177.34 436.54,178.66 438.05,179.84 439.56,181.03 441.07,182.23 442.58,183.28 444.09,184.20 445.60,184.91 447.11,185.42 448.62,185.74 450.13,185.84 451.65,185.91 453.16,186.05 454.67,186.24 456.18,186.56 457.69,187.17 459.20,188.03 460.71,188.97 462.22,190.15 463.73,191.59 465.24,193.31 466.76,195.44 468.27,198.02 469.78,200.87 471.29,203.98 472.80,207.25 474.31,210.58 475.82,213.98 477.33,217.47 478.84,221.03 480.35,224.54 481.87,227.82 483.38,230.67 484.89,232.85 486.40,234.34 487.91,235.09 489.42,235.52 490.93,236.03 492.44,236.63 493.95,237.13 495.46,237.32 496.98,237.18 498.49,236.72 500.00,235.93 501.51,234.99 503.02,234.07 504.53,233.15 506.04,232.46 507.55,232.20 509.06,232.36 510.57,232.51 512.09,232.56 513.60,232.52 515.11,232.56 516.62,232.86 518.13,233.32 519.64,233.93 521.15,234.68 522.66,235.57 524.17,236.62 525.68,237.83 527.20,239.21 528.71,240.56 530.22,241.85 531.73,243.12 533.24,244.25 534.75,245.24 536.26,246.09 537.77,246.89 539.28,247.75 540.79,248.66 542.31,249.61 543.82,250.57 545.33,251.53 546.84,252.48 548.35,253.22 549.86,253.72 551.37,253.98 552.88,253.96 554.39,253.65 555.90,253.10 557.42,252.60 558.93,252.21 560.44,252.03 561.95,251.19 563.46,249.31 564.97,245.62 566.48,240.17 567.99,233.05 569.50,225.03 571.01,216.09 572.53,206.17 574.04,195.52 577.50,165.75 581.25,141.00 585.00,121.00 588.75,103.50 590.75,98.50 593.75,106.00 597.50,116.00 601.25,123.50 606.25,123.50 610.00,127.25 615.00,122.25 620.00,123.50 625.00,131.00 630.00,138.50 635.00,138.50 640.00,141.00 645.00,137.25 648.75,146.00 653.75,161.00 657.14,168.02 658.65,173.01 660.16,177.89 661.67,182.37 663.19,186.50 664.70,190.15 666.21,193.26 667.72,195.78 669.23,197.76 670.74,199.38 672.25,200.80 673.76,202.10 675.27,203.28 676.78,204.48 678.30,205.56 679.81,206.52 681.32,207.45 682.83,208.38 684.34,209.33 685.85,210.23 687.36,211.01 688.87,211.67 690.38,212.21 691.89,212.71 693.41,213.20 694.92,213.68 696.43,214.14 697.94,214.60 699.45,215.14 700.96,215.71 702.47,216.30 703.98,216.91 705.49,217.54 707.00,218.14 708.52,218.73 710.03,219.33 711.54,219.96 713.05,220.53 714.56,220.87 716.07,220.96 717.58,220.79 719.09,220.40 720.60,220.17 722.12,220.13 723.63,220.28 725.14,220.62 726.65,221.15 728.16,221.70 729.67,221.93 731.18,221.83 732.69,221.41 734.20,220.94 735.71,220.59 737.22,220.48 738.74,220.72 740.25,221.25 741.76,221.72 743.27,222.21 744.78,222.71 746.29,223.23 747.80,223.69 749.31,224.27 750.82,225.31 752.33,226.62 753.85,228.10 755.36,229.51 756.87,230.91 758.38,232.33 759.89,233.64 761.40,234.88 762.91,235.97 764.42,236.86 765.93,237.55 767.44,238.04 768.96,238.39 770.47,238.62 771.98,238.72 773.49,238.86 775.00,239.15 776.51,239.59 778.02,240.12 779.53,240.63 781.04,241.11 782.55,241.57 784.07,242.06 785.58,242.64 787.09,243.30 788.60,244.05 790.11,244.90 791.62,245.80 793.13,246.77 794.64,247.67 796.15,248.36 797.66,248.86 799.18,249.31 800.69,249.71 802.20,250.09" fill="none" stroke="#111" stroke-width="1.2" stroke-linejoin="round"/>
</g>
<rect x="14" y="207.5" width="6" height="1.2" fill="#f08a20"/>
<rect x="14.5" y="21.5" width="792" height="263" fill="none" stroke="#d4d4d4" stroke-width="1" shape-rendering="crispEdges"/>
<rect x="14" y="66.5" width="792" height="1.5" fill="#111" shape-rendering="crispEdges"/>
<text x="20" y="64.5" fill="#222">14.38</text>
<text x="19.8" y="32.7" fill="#2a2af0">MM (7)</text>
<text x="72.2" y="32.7" fill="#f01818">MM (20)</text>
<text x="131.8" y="32.7" fill="#f3a349">BOLL (20, 2)</text>
<text x="215.6" y="32.7" fill="#17a817">MM (100)</text>
<text x="282.3" y="32.7" fill="#222">MM (14)</text>
<text x="342.2" y="32.7" fill="#222">EVT</text>
<text x="380.2" y="32.7" fill="#c01414">SUPERTREND (10, 3)</text>
<text x="14.7" y="12.5" fill="#777">CARMAT - abcbourse.com</text>
<text x="805.5" y="12.5" fill="#777" text-anchor="end">10 JOURS - 10 MINUTES</text>
<g fill="#555" clip-path="url(#t1)">
<text x="811.2" y="113.8">14.00</text>
<text x="811.2" y="161.8">13.60</text>
<text x="811.2" y="209.8">13.20</text>
<text x="811.2" y="256.8">12.80</text>
</g>
<rect x="808" y="51" width="47" height="16.6" fill="#008000"/>
<text x="811.2" y="63.5" fill="#fff" font-weight="bold">14.45</text>
<rect x="808" y="238.2" width="47" height="16.6" fill="#3366ff"/>
<text x="811.2" y="250.7" fill="#fff">12.89</text>
<rect x="808" y="258.2" width="47" height="16.6" fill="#bb0000"/>
<text x="811.2" y="270.7" fill="#fff">12.72</text>
<g shape-rendering="crispEdges">
<rect x="13" y="294" width="793" height="1" fill="#000" fill-opacity="0.137"/>
<rect x="13" y="335" width="793" height="1" fill="#000" fill-opacity="0.137"/>
<rect x="98" y="288" width="1" height="87" fill="#000" fill-opacity="0.137"/>
<rect x="176" y="288" width="1" height="87" fill="#000" fill-opacity="0.137"/>
<rect x="255" y="288" width="1" height="87" fill="#000" fill-opacity="0.137"/>
<rect x="333" y="288" width="1" height="87" fill="#000" fill-opacity="0.137"/>
<rect x="412" y="288" width="1" height="87" fill="#000" fill-opacity="0.137"/>
<rect x="490" y="288" width="1" height="87" fill="#000" fill-opacity="0.137"/>
<rect x="569" y="288" width="1" height="87" fill="#000" fill-opacity="0.137"/>
<rect x="647" y="288" width="1" height="87" fill="#000" fill-opacity="0.137"/>
<rect x="726" y="288" width="1" height="87" fill="#000" fill-opacity="0.137"/>
<rect x="19.5" y="288" width="77.0" height="87" fill="#000" fill-opacity="0.08" shape-rendering="auto"/>
<rect x="176" y="288" width="75.5" height="87" fill="#000" fill-opacity="0.08" shape-rendering="auto"/>
<rect x="333" y="288" width="75" height="87" fill="#000" fill-opacity="0.08" shape-rendering="auto"/>
<rect x="490.5" y="288" width="75.0" height="87" fill="#000" fill-opacity="0.08" shape-rendering="auto"/>
<rect x="647.5" y="288" width="74.5" height="87" fill="#000" fill-opacity="0.08" shape-rendering="auto"/>
</g>
<g clip-path="url(#c2)" shape-rendering="crispEdges">
<rect x="19.0" y="374.5" width="1" height="1.0" fill="#e0301e"/>
<rect x="20.5" y="374.4" width="1" height="1.1" fill="#e0301e"/>
<rect x="23.5" y="373.7" width="1" height="1.8" fill="#2dc42d"/>
<rect x="26.6" y="374.1" width="1" height="1.4" fill="#2dc42d"/>
<rect x="29.6" y="372.7" width="1" height="2.8" fill="#e0301e"/>
<rect x="34.1" y="374.0" width="1" height="1.5" fill="#2dc42d"/>
<rect x="35.6" y="373.8" width="1" height="1.7" fill="#2dc42d"/>
<rect x="40.2" y="374.4" width="1" height="1.1" fill="#2dc42d"/>
<rect x="41.7" y="373.6" width="1" height="1.9" fill="#2dc42d"/>
<rect x="44.7" y="374.0" width="1" height="1.5" fill="#e0301e"/>
<rect x="49.2" y="374.5" width="1" height="1.0" fill="#e0301e"/>
<rect x="50.7" y="374.6" width="1" height="0.9" fill="#2dc42d"/>
<rect x="53.8" y="374.6" width="1" height="0.9" fill="#e0301e"/>
<rect x="55.3" y="373.2" width="1" height="2.3" fill="#2dc42d"/>
<rect x="56.8" y="374.5" width="1" height="1.0" fill="#e0301e"/>
<rect x="70.4" y="374.3" width="1" height="1.2" fill="#2dc42d"/>
<rect x="71.9" y="373.1" width="1" height="2.4" fill="#2dc42d"/>
<rect x="73.4" y="374.6" width="1" height="0.9" fill="#2dc42d"/>
<rect x="74.9" y="374.1" width="1" height="1.4" fill="#e0301e"/>
<rect x="76.4" y="373.4" width="1" height="2.1" fill="#e0301e"/>
<rect x="81.0" y="374.3" width="1" height="1.2" fill="#2dc42d"/>
<rect x="82.5" y="373.6" width="1" height="1.9" fill="#e0301e"/>
<rect x="85.5" y="374.8" width="1" height="0.7" fill="#e0301e"/>
<rect x="87.0" y="373.6" width="1" height="1.9" fill="#2dc42d"/>
<rect x="90.0" y="372.5" width="1" height="3.0" fill="#e0301e"/>
<rect x="93.0" y="372.9" width="1" height="2.6" fill="#2dc42d"/>
<rect x="94.5" y="373.6" width="1" height="1.9" fill="#2dc42d"/>
<rect x="99.1" y="373.3" width="1" height="2.2" fill="#e0301e"/>
<rect x="100.6" y="374.8" width="1" height="0.7" fill="#e0301e"/>
<rect x="114.2" y="373.8" width="1" height="1.7" fill="#2dc42d"/>
<rect x="115.7" y="374.1" width="1" height="1.4" fill="#e0301e"/>
<rect x="117.2" y="373.3" width="1" height="2.2" fill="#2dc42d"/>
<rect x="120.2" y="374.3" width="1" height="1.2" fill="#e0301e"/>
<rect x="126.3" y="374.3" width="1" height="1.2" fill="#e0301e"/>
<rect x="129.3" y="374.3" width="1" height="1.2" fill="#e0301e"/>
<rect x="130.8" y="373.6" width="1" height="1.9" fill="#e0301e"/>
<rect x="132.3" y="373.3" width="1" height="2.2" fill="#2dc42d"/>
<rect x="133.8" y="374.0" width="1" height="1.5" fill="#2dc42d"/>
<rect x="136.9" y="372.5" width="1" height="3.0" fill="#e0301e"/>
<rect x="141.4" y="373.4" width="1" height="2.1" fill="#2dc42d"/>
<rect x="148.9" y="372.6" width="1" height="2.9" fill="#2dc42d"/>
<rect x="150.5" y="372.6" width="1" height="2.9" fill="#2dc42d"/>
<rect x="152.0" y="374.1" width="1" height="1.4" fill="#2dc42d"/>
<rect x="153.5" y="374.4" width="1" height="1.1" fill="#2dc42d"/>
<rect x="161.0" y="373.2" width="1" height="2.3" fill="#e0301e"/>
<rect x="165.6" y="373.8" width="1" height="1.7" fill="#e0301e"/>
<rect x="168.6" y="374.8" width="1" height="0.7" fill="#2dc42d"/>
<rect x="170.1" y="374.8" width="1" height="0.7" fill="#2dc42d"/>
<rect x="171.6" y="373.7" width="1" height="1.8" fill="#e0301e"/>
<rect x="176.1" y="373.2" width="1" height="2.3" fill="#e0301e"/>
<rect x="179.2" y="374.7" width="1" height="0.8" fill="#2dc42d"/>
<rect x="185.2" y="372.0" width="1" height="3.5" fill="#2dc42d"/>
<rect x="192.8" y="374.2" width="1" height="1.3" fill="#2dc42d"/>
<rect x="194.3" y="374.2" width="1" height="1.3" fill="#2dc42d"/>
<rect x="197.3" y="374.2" width="1" height="1.3" fill="#e0301e"/>
<rect x="201.8" y="372.9" width="1" height="2.6" fill="#2dc42d"/>
<rect x="203.3" y="373.8" width="1" height="1.7" fill="#e0301e"/>
<rect x="204.9" y="373.5" width="1" height="2.0" fill="#2dc42d"/>
<rect x="206.4" y="374.6" width="1" height="0.9" fill="#e0301e"/>
<rect x="207.9" y="374.5" width="1" height="1.0" fill="#2dc42d"/>
<rect x="216.9" y="374.9" width="1" height="0.6" fill="#e0301e"/>
<rect x="220.0" y="374.6" width="1" height="0.9" fill="#e0301e"/>
<rect x="223.0" y="374.1" width="1" height="1.4" fill="#e0301e"/>
<rect x="230.5" y="372.7" width="1" height="2.8" fill="#2dc42d"/>
<rect x="232.1" y="374.1" width="1" height="1.4" fill="#2dc42d"/>
<rect x="233.6" y="374.2" width="1" height="1.3" fill="#e0301e"/>
<rect x="235.1" y="374.1" width="1" height="1.4" fill="#2dc42d"/>
<rect x="236.6" y="373.5" width="1" height="2.0" fill="#e0301e"/>
<rect x="238.1" y="374.3" width="1" height="1.2" fill="#2dc42d"/>
<rect x="239.6" y="374.8" width="1" height="0.7" fill="#2dc42d"/>
<rect x="245.6" y="374.0" width="1" height="1.5" fill="#2dc42d"/>
<rect x="250.2" y="374.6" width="1" height="0.9" fill="#2dc42d"/>
<rect x="253.2" y="373.0" width="1" height="2.5" fill="#2dc42d"/>
<rect x="254.7" y="373.2" width="1" height="2.3" fill="#e0301e"/>
<rect x="257.7" y="374.7" width="1" height="0.8" fill="#2dc42d"/>
<rect x="259.2" y="373.4" width="1" height="2.1" fill="#e0301e"/>
<rect x="260.8" y="373.5" width="1" height="2.0" fill="#e0301e"/>
<rect x="262.3" y="373.7" width="1" height="1.8" fill="#2dc42d"/>
<rect x="268.3" y="374.7" width="1" height="0.8" fill="#e0301e"/>
<rect x="275.9" y="373.6" width="1" height="1.9" fill="#2dc42d"/>
<rect x="277.4" y="373.8" width="1" height="1.7" fill="#2dc42d"/>
<rect x="281.9" y="374.5" width="1" height="1.0" fill="#e0301e"/>
<rect x="286.4" y="374.1" width="1" height="1.4" fill="#2dc42d"/>
<rect x="288.0" y="374.3" width="1" height="1.2" fill="#2dc42d"/>
<rect x="291.0" y="374.3" width="1" height="1.2" fill="#e0301e"/>
<rect x="292.5" y="373.9" width="1" height="1.6" fill="#e0301e"/>
<rect x="295.5" y="372.9" width="1" height="2.6" fill="#2dc42d"/>
<rect x="297.0" y="373.4" width="1" height="2.1" fill="#e0301e"/>
<rect x="298.5" y="373.8" width="1" height="1.7" fill="#2dc42d"/>
<rect x="300.0" y="374.2" width="1" height="1.3" fill="#2dc42d"/>
<rect x="306.1" y="374.6" width="1" height="0.9" fill="#e0301e"/>
<rect x="307.6" y="373.8" width="1" height="1.7" fill="#e0301e"/>
<rect x="310.6" y="374.1" width="1" height="1.4" fill="#e0301e"/>
<rect x="312.1" y="374.2" width="1" height="1.3" fill="#2dc42d"/>
<rect x="315.2" y="374.5" width="1" height="1.0" fill="#2dc42d"/>
<rect x="322.7" y="373.3" width="1" height="2.2" fill="#e0301e"/>
<rect x="324.2" y="374.9" width="1" height="0.6" fill="#e0301e"/>
<rect x="327.2" y="373.7" width="1" height="1.8" fill="#2dc42d"/>
<rect x="328.8" y="374.7" width="1" height="0.8" fill="#e0301e"/>
<rect x="330.3" y="374.4" width="1" height="1.1" fill="#2dc42d"/>
<rect x="333.3" y="372.4" width="1" height="3.1" fill="#e0301e"/>
<rect x="334.8" y="374.5" width="1" height="1.0" fill="#2dc42d"/>
<rect x="336.3" y="374.1" width="1" height="1.4" fill="#2dc42d"/>
<rect x="339.3" y="373.6" width="1" height="1.9" fill="#2dc42d"/>
<rect x="340.8" y="374.8" width="1" height="0.7" fill="#2dc42d"/>
<rect x="342.4" y="374.8" width="1" height="0.7" fill="#e0301e"/>
<rect x="343.9" y="373.3" width="1" height="2.2" fill="#2dc42d"/>
<rect x="346.9" y="373.4" width="1" height="2.1" fill="#2dc42d"/>
<rect x="349.9" y="374.7" width="1" height="0.8" fill="#2dc42d"/>
<rect x="351.4" y="373.3" width="1" height="2.2" fill="#e0301e"/>
<rect x="352.9" y="371.9" width="1" height="3.6" fill="#e0301e"/>
<rect x="354.4" y="374.6" width="1" height="0.9" fill="#2dc42d"/>
<rect x="357.5" y="374.3" width="1" height="1.2" fill="#2dc42d"/>
<rect x="359.0" y="374.8" width="1" height="0.7" fill="#e0301e"/>
<rect x="362.0" y="374.7" width="1" height="0.8" fill="#2dc42d"/>
<rect x="363.5" y="371.5" width="1" height="4.0" fill="#e0301e"/>
<rect x="365.0" y="374.0" width="1" height="1.5" fill="#2dc42d"/>
<rect x="368.0" y="373.3" width="1" height="2.2" fill="#e0301e"/>
<rect x="369.6" y="374.0" width="1" height="1.5" fill="#2dc42d"/>
<rect x="371.1" y="373.4" width="1" height="2.1" fill="#2dc42d"/>
<rect x="372.6" y="373.0" width="1" height="2.5" fill="#e0301e"/>
<rect x="374.1" y="374.8" width="1" height="0.7" fill="#e0301e"/>
<rect x="378.6" y="374.8" width="1" height="0.7" fill="#2dc42d"/>
<rect x="380.1" y="373.7" width="1" height="1.8" fill="#e0301e"/>
<rect x="387.7" y="374.7" width="1" height="0.8" fill="#e0301e"/>
<rect x="392.2" y="373.8" width="1" height="1.7" fill="#e0301e"/>
<rect x="395.2" y="373.7" width="1" height="1.8" fill="#e0301e"/>
<rect x="398.3" y="374.1" width="1" height="1.4" fill="#e0301e"/>
<rect x="399.8" y="373.9" width="1" height="1.6" fill="#2dc42d"/>
<rect x="401.3" y="374.0" width="1" height="1.5" fill="#e0301e"/>
<rect x="402.8" y="373.2" width="1" height="2.3" fill="#2dc42d"/>
<rect x="404.3" y="373.1" width="1" height="2.4" fill="#e0301e"/>
<rect x="408.8" y="373.8" width="1" height="1.7" fill="#2dc42d"/>
<rect x="410.3" y="374.8" width="1" height="0.7" fill="#e0301e"/>
<rect x="414.9" y="373.1" width="1" height="2.4" fill="#e0301e"/>
<rect x="417.9" y="374.0" width="1" height="1.5" fill="#e0301e"/>
<rect x="419.4" y="373.1" width="1" height="2.4" fill="#2dc42d"/>
<rect x="420.9" y="374.1" width="1" height="1.4" fill="#2dc42d"/>
<rect x="422.4" y="374.6" width="1" height="0.9" fill="#e0301e"/>
<rect x="423.9" y="373.2" width="1" height="2.3" fill="#e0301e"/>
<rect x="425.5" y="373.7" width="1" height="1.8" fill="#2dc42d"/>
<rect x="427.0" y="374.5" width="1" height="1.0" fill="#e0301e"/>
<rect x="428.5" y="374.0" width="1" height="1.5" fill="#2dc42d"/>
<rect x="431.5" y="374.0" width="1" height="1.5" fill="#e0301e"/>
<rect x="433.0" y="373.0" width="1" height="2.5" fill="#e0301e"/>
<rect x="434.5" y="373.3" width="1" height="2.2" fill="#e0301e"/>
<rect x="437.5" y="374.6" width="1" height="0.9" fill="#2dc42d"/>
<rect x="439.1" y="373.3" width="1" height="2.2" fill="#2dc42d"/>
<rect x="440.6" y="374.7" width="1" height="0.8" fill="#2dc42d"/>
<rect x="443.6" y="374.4" width="1" height="1.1" fill="#e0301e"/>
<rect x="445.1" y="372.6" width="1" height="2.9" fill="#e0301e"/>
<rect x="446.6" y="374.5" width="1" height="1.0" fill="#e0301e"/>
<rect x="448.1" y="373.6" width="1" height="1.9" fill="#e0301e"/>
<rect x="451.1" y="372.9" width="1" height="2.6" fill="#2dc42d"/>
<rect x="452.7" y="374.6" width="1" height="0.9" fill="#e0301e"/>
<rect x="455.7" y="374.2" width="1" height="1.3" fill="#2dc42d"/>
<rect x="457.2" y="374.7" width="1" height="0.8" fill="#2dc42d"/>
<rect x="458.7" y="374.1" width="1" height="1.4" fill="#e0301e"/>
<rect x="460.2" y="372.5" width="1" height="3.0" fill="#2dc42d"/>
<rect x="461.7" y="374.8" width="1" height="0.7" fill="#e0301e"/>
<rect x="463.2" y="373.9" width="1" height="1.6" fill="#e0301e"/>
<rect x="467.8" y="374.1" width="1" height="1.4" fill="#e0301e"/>
<rect x="469.3" y="373.2" width="1" height="2.3" fill="#e0301e"/>
<rect x="470.8" y="374.9" width="1" height="0.6" fill="#2dc42d"/>
<rect x="473.8" y="373.3" width="1" height="2.2" fill="#2dc42d"/>
<rect x="476.8" y="372.9" width="1" height="2.6" fill="#e0301e"/>
<rect x="478.3" y="374.6" width="1" height="0.9" fill="#e0301e"/>
<rect x="481.4" y="374.5" width="1" height="1.0" fill="#2dc42d"/>
<rect x="482.9" y="374.0" width="1" height="1.5" fill="#e0301e"/>
<rect x="484.4" y="374.8" width="1" height="0.7" fill="#2dc42d"/>
<rect x="485.9" y="373.9" width="1" height="1.6" fill="#e0301e"/>
<rect x="488.9" y="373.7" width="1" height="1.8" fill="#e0301e"/>
<rect x="495.0" y="374.4" width="1" height="1.1" fill="#e0301e"/>
<rect x="499.5" y="372.9" width="1" height="2.6" fill="#2dc42d"/>
<rect x="502.5" y="374.5" width="1" height="1.0" fill="#e0301e"/>
<rect x="504.0" y="374.8" width="1" height="0.7" fill="#e0301e"/>
<rect x="505.5" y="374.9" width="1" height="0.6" fill="#e0301e"/>
<rect x="507.1" y="374.1" width="1" height="1.4" fill="#2dc42d"/>
<rect x="508.6" y="373.5" width="1" height="2.0" fill="#2dc42d"/>
<rect x="510.1" y="374.3" width="1" height="1.2" fill="#2dc42d"/>
<rect x="511.6" y="374.6" width="1" height="0.9" fill="#2dc42d"/>
<rect x="514.6" y="373.9" width="1" height="1.6" fill="#2dc42d"/>
<rect x="516.1" y="373.2" width="1" height="2.3" fill="#2dc42d"/>
<rect x="517.6" y="374.4" width="1" height="1.1" fill="#e0301e"/>
<rect x="520.7" y="374.7" width="1" height="0.8" fill="#e0301e"/>
<rect x="525.2" y="374.0" width="1" height="1.5" fill="#e0301e"/>
<rect x="526.7" y="374.5" width="1" height="1.0" fill="#2dc42d"/>
<rect x="528.2" y="372.2" width="1" height="3.3" fill="#2dc42d"/>
<rect x="529.7" y="374.5" width="1" height="1.0" fill="#2dc42d"/>
<rect x="531.2" y="371.3" width="1" height="4.2" fill="#e0301e"/>
<rect x="532.7" y="373.4" width="1" height="2.1" fill="#2dc42d"/>
<rect x="534.3" y="373.5" width="1" height="2.0" fill="#2dc42d"/>
<rect x="535.8" y="372.7" width="1" height="2.8" fill="#2dc42d"/>
<rect x="537.3" y="372.3" width="1" height="3.2" fill="#2dc42d"/>
<rect x="538.8" y="374.8" width="1" height="0.7" fill="#2dc42d"/>
<rect x="541.8" y="373.9" width="1" height="1.6" fill="#e0301e"/>
<rect x="543.3" y="373.8" width="1" height="1.7" fill="#e0301e"/>
<rect x="546.3" y="374.6" width="1" height="0.9" fill="#2dc42d"/>
<rect x="550.9" y="373.5" width="1" height="2.0" fill="#e0301e"/>
<rect x="552.4" y="373.3" width="1" height="2.2" fill="#2dc42d"/>
<rect x="556.9" y="374.4" width="1" height="1.1" fill="#2dc42d"/>
<rect x="558.4" y="373.8" width="1" height="1.7" fill="#e0301e"/>
<rect x="563.0" y="374.6" width="1" height="0.9" fill="#e0301e"/>
<rect x="566.0" y="372.9" width="1" height="2.6" fill="#e0301e"/>
<rect x="567.5" y="371.6" width="1" height="3.9" fill="#2dc42d"/>
<rect x="569.0" y="372.8" width="1" height="2.7" fill="#2dc42d"/>
<rect x="570.5" y="373.4" width="1" height="2.1" fill="#e0301e"/>
<rect x="572.0" y="373.8" width="1" height="1.7" fill="#e0301e"/>
<rect x="573.5" y="371.0" width="1" height="4.5" fill="#2dc42d"/>
<rect x="575.0" y="373.6" width="1" height="1.9" fill="#e0301e"/>
<rect x="581.1" y="368.4" width="1" height="7.1" fill="#e0301e"/>
<rect x="584.1" y="372.4" width="1" height="3.1" fill="#2dc42d"/>
<rect x="585.6" y="371.1" width="1" height="4.4" fill="#e0301e"/>
<rect x="588.6" y="372.0" width="1" height="3.5" fill="#e0301e"/>
<rect x="590.2" y="371.1" width="1" height="4.4" fill="#2dc42d"/>
<rect x="596.2" y="374.1" width="1" height="1.4" fill="#2dc42d"/>
<rect x="597.7" y="373.2" width="1" height="2.3" fill="#2dc42d"/>
<rect x="603.8" y="372.2" width="1" height="3.3" fill="#2dc42d"/>
<rect x="605.3" y="372.3" width="1" height="3.2" fill="#e0301e"/>
<rect x="608.3" y="373.9" width="1" height="1.6" fill="#e0301e"/>
<rect x="611.3" y="373.8" width="1" height="1.7" fill="#e0301e"/>
<rect x="612.8" y="369.3" width="1" height="6.2" fill="#2dc42d"/>
<rect x="614.3" y="373.4" width="1" height="2.1" fill="#e0301e"/>
<rect x="615.8" y="373.5" width="1" height="2.0" fill="#e0301e"/>
<rect x="617.4" y="374.0" width="1" height="1.5" fill="#e0301e"/>
<rect x="627.9" y="372.3" width="1" height="3.2" fill="#e0301e"/>
<rect x="631.0" y="374.0" width="1" height="1.5" fill="#2dc42d"/>
<rect x="634.0" y="372.5" width="1" height="3.0" fill="#2dc42d"/>
<rect x="635.5" y="374.3" width="1" height="1.2" fill="#2dc42d"/>
<rect x="637.0" y="372.0" width="1" height="3.5" fill="#2dc42d"/>
<rect x="638.5" y="372.5" width="1" height="3.0" fill="#e0301e"/>
<rect x="640.0" y="372.9" width="1" height="2.6" fill="#2dc42d"/>
<rect x="644.6" y="372.6" width="1" height="2.9" fill="#e0301e"/>
<rect x="647.6" y="372.5" width="1" height="3.0" fill="#e0301e"/>
<rect x="650.6" y="373.5" width="1" height="2.0" fill="#2dc42d"/>
<rect x="652.1" y="371.3" width="1" height="4.2" fill="#2dc42d"/>
<rect x="656.6" y="373.4" width="1" height="2.1" fill="#2dc42d"/>
<rect x="659.7" y="374.1" width="1" height="1.4" fill="#2dc42d"/>
<rect x="661.2" y="373.6" width="1" height="1.9" fill="#e0301e"/>
<rect x="670.2" y="372.8" width="1" height="2.7" fill="#2dc42d"/>
<rect x="671.8" y="370.6" width="1" height="4.9" fill="#2dc42d"/>
<rect x="674.8" y="371.2" width="1" height="4.3" fill="#2dc42d"/>
<rect x="676.3" y="374.0" width="1" height="1.5" fill="#2dc42d"/>
<rect x="677.8" y="367.4" width="1" height="8.1" fill="#2dc42d"/>
<rect x="680.8" y="372.5" width="1" height="3.0" fill="#e0301e"/>
<rect x="683.8" y="374.4" width="1" height="1.1" fill="#e0301e"/>
<rect x="686.9" y="374.1" width="1" height="1.4" fill="#e0301e"/>
<rect x="688.4" y="373.6" width="1" height="1.9" fill="#e0301e"/>
<rect x="692.9" y="374.4" width="1" height="1.1" fill="#e0301e"/>
<rect x="694.4" y="373.6" width="1" height="1.9" fill="#e0301e"/>
<rect x="695.9" y="373.3" width="1" height="2.2" fill="#2dc42d"/>
<rect x="700.5" y="373.0" width="1" height="2.5" fill="#e0301e"/>
<rect x="703.5" y="374.9" width="1" height="0.6" fill="#2dc42d"/>
<rect x="706.5" y="371.8" width="1" height="3.7" fill="#2dc42d"/>
<rect x="709.5" y="373.2" width="1" height="2.3" fill="#e0301e"/>
<rect x="711.0" y="372.9" width="1" height="2.6" fill="#e0301e"/>
<rect x="712.5" y="373.5" width="1" height="2.0" fill="#e0301e"/>
<rect x="717.1" y="373.2" width="1" height="2.3" fill="#2dc42d"/>
<rect x="718.6" y="373.8" width="1" height="1.7" fill="#2dc42d"/>
<rect x="723.1" y="372.1" width="1" height="3.4" fill="#2dc42d"/>
<rect x="724.6" y="373.5" width="1" height="2.0" fill="#2dc42d"/>
<rect x="730.7" y="374.9" width="1" height="0.6" fill="#e0301e"/>
<rect x="732.2" y="372.6" width="1" height="2.9" fill="#2dc42d"/>
<rect x="736.7" y="374.1" width="1" height="1.4" fill="#2dc42d"/>
<rect x="739.7" y="374.4" width="1" height="1.1" fill="#e0301e"/>
<rect x="741.3" y="372.8" width="1" height="2.7" fill="#2dc42d"/>
<rect x="747.3" y="371.7" width="1" height="3.8" fill="#e0301e"/>
<rect x="748.8" y="374.2" width="1" height="1.3" fill="#e0301e"/>
<rect x="751.8" y="374.5" width="1" height="1.0" fill="#2dc42d"/>
<rect x="757.9" y="374.5" width="1" height="1.0" fill="#2dc42d"/>
<rect x="763.9" y="373.2" width="1" height="2.3" fill="#2dc42d"/>
<rect x="771.5" y="373.7" width="1" height="1.8" fill="#e0301e"/>
<rect x="773.0" y="373.6" width="1" height="1.9" fill="#2dc42d"/>
<rect x="774.5" y="374.4" width="1" height="1.1" fill="#e0301e"/>
<rect x="776.0" y="374.5" width="1" height="1.0" fill="#2dc42d"/>
<rect x="777.5" y="374.4" width="1" height="1.1" fill="#2dc42d"/>
<rect x="779.0" y="374.1" width="1" height="1.4" fill="#2dc42d"/>
<rect x="780.5" y="373.5" width="1" height="2.0" fill="#e0301e"/>
<rect x="783.6" y="373.5" width="1" height="2.0" fill="#2dc42d"/>
<rect x="795.7" y="373.7" width="1" height="1.8" fill="#2dc42d"/>
<rect x="797.2" y="373.9" width="1" height="1.6" fill="#e0301e"/>
<rect x="798.7" y="374.4" width="1" height="1.1" fill="#2dc42d"/>
<rect x="800.2" y="373.8" width="1" height="1.7" fill="#2dc42d"/>
<rect x="801.7" y="374.9" width="1" height="0.6" fill="#2dc42d"/>
<rect x="565.5" y="308" width="1" height="67.5" fill="#2dc42d"/>
<rect x="567.5" y="361" width="1" height="14.5" fill="#e0301e"/>
<rect x="569.0" y="362" width="1" height="13.5" fill="#2dc42d"/>
<rect x="570.5" y="363" width="1" height="12.5" fill="#e0301e"/>
<rect x="572.0" y="361" width="1" height="14.5" fill="#2dc42d"/>
<rect x="573.5" y="365" width="1" height="10.5" fill="#e0301e"/>
<rect x="574.3" y="357.5" width="1" height="18.0" fill="#2dc42d"/>
<rect x="576.0" y="366" width="1" height="9.5" fill="#e0301e"/>
<rect x="577.5" y="367" width="1" height="8.5" fill="#2dc42d"/>
<rect x="579.0" y="366" width="1" height="9.5" fill="#e0301e"/>
<rect x="581.0" y="344" width="1" height="31.5" fill="#e0301e"/>
<rect x="583.0" y="363" width="1" height="12.5" fill="#2dc42d"/>
<rect x="584.5" y="365" width="1" height="10.5" fill="#2dc42d"/>
<rect x="586.0" y="368" width="1" height="7.5" fill="#2dc42d"/>
<rect x="587.5" y="369" width="1" height="6.5" fill="#2dc42d"/>
<rect x="589.0" y="371" width="1" height="4.5" fill="#e0301e"/>
<rect x="590.5" y="370" width="1" height="5.5" fill="#2dc42d"/>
<rect x="592.0" y="371" width="1" height="4.5" fill="#e0301e"/>
<rect x="619.5" y="356" width="1" height="19.5" fill="#e0301e"/>
<rect x="659.9" y="343" width="1" height="32.5" fill="#e0301e"/>
<rect x="661.4" y="356" width="1" height="19.5" fill="#2dc42d"/>
<rect x="666.9" y="356.5" width="1" height="19.0" fill="#2dc42d"/>
<rect x="691.0" y="347.5" width="1" height="28.0" fill="#e0301e"/>
<rect x="694.0" y="361" width="1" height="14.5" fill="#e0301e"/>
<rect x="722.8" y="337" width="1" height="38.5" fill="#e0301e"/>
<rect x="47.5" y="365" width="1" height="10.5" fill="#2dc42d"/>
<rect x="216.5" y="371" width="1" height="4.5" fill="#2dc42d"/>
<rect x="330.5" y="370" width="1" height="5.5" fill="#2dc42d"/>
<rect x="415.5" y="371" width="1" height="4.5" fill="#2dc42d"/>
<rect x="637.5" y="370" width="1" height="5.5" fill="#2dc42d"/>
<rect x="644.5" y="370" width="1" height="5.5" fill="#2dc42d"/>
<rect x="648.5" y="369" width="1" height="6.5" fill="#2dc42d"/>
<rect x="652.5" y="371" width="1" height="4.5" fill="#e0301e"/>
<rect x="656.5" y="371" width="1" height="4.5" fill="#2dc42d"/>
<rect x="635.5" y="371" width="1" height="4.5" fill="#e0301e"/>
<rect x="731.0" y="371" width="1" height="4.5" fill="#2dc42d"/>
<rect x="740.5" y="371" width="1" height="4.5" fill="#e0301e"/>
<rect x="789.5" y="371" width="1" height="4.5" fill="#e0301e"/>
<rect x="791.5" y="372" width="1" height="3.5" fill="#2dc42d"/>
</g>
<rect x="14.5" y="288.5" width="792" height="87" fill="none" stroke="#d4d4d4" stroke-width="1" shape-rendering="crispEdges"/>
<text x="19.2" y="300.5" fill="#2fbf2f">VOLUME</text>
<g fill="#555" clip-path="url(#t2)">
<text x="811.2" y="295.8">40 000</text>
<text x="811.2" y="336.8">20 000</text>
</g>
<rect x="808" y="359.2" width="47" height="16.5" fill="#009900"/>
<text x="811.2" y="371.7" fill="#fff" font-weight="bold">1 425</text>
<g shape-rendering="crispEdges">
<rect x="14" y="379" width="792" height="26.5" fill="#ffd6d6"/>
<rect x="14" y="441.5" width="792" height="24.5" fill="#d9ecd9"/>
<rect x="13" y="397" width="793" height="1" fill="#000" fill-opacity="0.137"/>
<rect x="13" y="432" width="793" height="1" fill="#000" fill-opacity="0.137"/>
<rect x="98" y="379" width="1" height="87" fill="#000" fill-opacity="0.137"/>
<rect x="176" y="379" width="1" height="87" fill="#000" fill-opacity="0.137"/>
<rect x="255" y="379" width="1" height="87" fill="#000" fill-opacity="0.137"/>
<rect x="333" y="379" width="1" height="87" fill="#000" fill-opacity="0.137"/>
<rect x="412" y="379" width="1" height="87" fill="#000" fill-opacity="0.137"/>
<rect x="490" y="379" width="1" height="87" fill="#000" fill-opacity="0.137"/>
<rect x="569" y="379" width="1" height="87" fill="#000" fill-opacity="0.137"/>
<rect x="647" y="379" width="1" height="87" fill="#000" fill-opacity="0.137"/>
<rect x="726" y="379" width="1" height="87" fill="#000" fill-opacity="0.137"/>
<rect x="19.5" y="379" width="77.0" height="87" fill="#000" fill-opacity="0.08" shape-rendering="auto"/>
<rect x="176" y="379" width="75.5" height="87" fill="#000" fill-opacity="0.08" shape-rendering="auto"/>
<rect x="333" y="379" width="75" height="87" fill="#000" fill-opacity="0.08" shape-rendering="auto"/>
<rect x="490.5" y="379" width="75.0" height="87" fill="#000" fill-opacity="0.08" shape-rendering="auto"/>
<rect x="647.5" y="379" width="74.5" height="87" fill="#000" fill-opacity="0.08" shape-rendering="auto"/>
</g>
<g shape-rendering="crispEdges">
<rect x="13" y="405" width="793" height="1" fill="#f76262"/>
<rect x="13" y="423" width="793" height="1" fill="#9cc8f5"/>
<rect x="13" y="441" width="793" height="1" fill="#55aa55"/>
</g>
<g clip-path="url(#c3)"><polyline points="19.00,423.00 20.75,379.00 22.25,403.50 24.00,421.00 25.25,411.00 26.50,417.25 29.00,412.25 31.50,418.50 34.00,416.00 36.50,421.50 40.25,416.00 44.00,411.50 46.50,413.50 49.50,408.00 51.50,411.00 54.00,408.50 56.50,413.50 60.25,410.50 64.00,416.00 67.75,417.25 69.00,424.75 71.50,417.25 73.50,421.00 75.25,418.50 77.75,427.25 79.50,424.75 82.75,432.25 85.25,434.75 87.75,438.00 90.25,428.50 92.00,426.00 95.25,429.75 97.75,433.00 100.25,436.00 104.00,441.50 106.50,440.50 107.75,436.00 110.25,437.25 112.75,430.50 115.25,429.75 117.75,435.50 121.50,436.50 125.25,433.00 129.00,431.50 131.50,423.50 133.50,428.00 135.25,424.00 139.00,424.00 141.50,429.00 144.00,424.75 146.50,429.00 149.00,428.00 151.50,411.00 153.50,412.25 156.00,418.50 159.00,413.50 161.50,412.25 164.75,406.75 167.00,408.50 169.50,408.00 172.00,413.50 174.00,408.50 176.00,407.25 177.00,427.25 178.50,419.75 180.25,427.25 184.00,424.75 187.75,425.50 190.25,423.00 194.00,424.75 199.00,420.50 202.75,426.00 206.50,424.75 210.25,428.50 212.75,424.75 215.25,428.50 217.75,417.25 220.25,414.75 222.75,417.25 225.25,426.00 227.00,433.00 228.00,432.25 230.50,434.00 233.00,429.75 235.50,418.50 238.00,413.50 241.75,404.75 244.25,401.75 247.50,401.00 249.25,403.00 251.00,405.50 253.00,402.25 254.75,401.00 256.00,407.25 258.00,413.50 260.00,416.50 262.50,413.00 264.25,413.50 266.75,419.75 269.25,423.00 271.00,420.50 273.50,433.50 275.50,431.50 277.50,429.75 279.25,430.50 281.75,426.00 284.25,428.00 287.50,422.25 290.00,426.00 293.00,423.50 296.75,418.50 300.50,418.00 304.25,414.75 306.25,413.00 308.00,422.25 310.50,419.00 313.00,416.00 316.75,414.75 318.50,423.50 320.50,431.50 322.50,422.25 325.50,421.50 328.50,421.00 330.50,414.75 333.00,418.50 335.50,421.00 338.00,424.75 340.00,422.25 341.75,429.75 343.50,423.50 346.75,423.50 350.00,420.50 354.25,419.75 356.75,416.00 359.25,422.25 364.25,422.25 366.75,416.00 369.25,410.50 371.75,411.00 373.50,410.50 375.50,422.25 377.50,424.75 379.25,417.25 381.75,416.50 384.25,422.25 388.00,424.00 390.00,418.50 392.50,423.50 396.00,423.50 399.25,419.00 401.75,428.50 404.25,429.75 406.75,427.25 408.50,416.00 410.50,413.00 413.00,415.50 415.50,414.00 418.00,417.25 420.50,419.75 423.00,426.00 425.00,432.25 426.75,437.25 428.50,427.25 430.50,429.75 432.50,427.25 434.25,429.75 436.25,424.75 438.00,430.50 440.00,424.00 442.00,423.50 444.50,424.00 447.00,429.75 449.50,428.50 452.50,423.00 455.00,422.25 457.00,426.00 458.25,437.25 460.00,431.00 463.25,432.25 465.75,436.00 467.00,445.50 469.00,438.00 471.50,436.50 474.00,443.00 475.75,438.00 478.25,440.50 480.75,443.00 483.25,440.50 485.00,427.25 487.00,424.75 489.00,429.75 491.50,424.00 493.25,429.75 495.75,432.25 499.00,426.00 502.00,420.50 505.00,423.00 507.50,424.75 510.00,428.50 512.50,426.00 515.75,424.75 518.25,434.00 520.75,429.00 523.25,431.50 525.75,434.00 533.25,434.00 535.00,429.00 537.00,433.00 539.00,435.50 540.75,429.75 543.25,434.75 545.75,438.00 548.25,439.00 549.50,420.50 550.75,427.25 552.50,419.00 554.00,425.50 555.75,422.25 557.50,416.00 560.00,417.25 562.50,419.75 564.50,426.00 565.75,408.50 567.00,397.25 568.25,406.00 570.00,399.75 572.00,403.50 574.00,399.75 576.50,401.00 578.25,404.00 580.00,403.00 581.50,416.00 584.50,414.75 587.00,412.25 589.50,417.25 592.00,421.50 595.00,423.00 597.00,418.50 599.00,421.50 602.00,417.25 604.50,416.00 607.00,418.50 610.75,419.00 614.50,418.50 617.00,420.50 619.00,427.25 620.75,433.00 623.25,429.75 625.75,427.25 627.50,429.00 629.50,421.00 632.00,417.25 634.50,418.50 637.00,424.75 639.50,426.00 642.00,421.50 644.00,423.50 645.50,437.25 648.00,436.00 649.75,438.00 651.50,442.25 653.50,435.50 656.00,431.50 658.00,434.75 660.50,430.50 663.00,432.25 665.50,429.00 668.00,432.25 671.00,429.75 674.75,429.00 678.50,428.00 681.00,431.50 683.50,427.25 686.50,428.50 689.75,428.00 692.25,429.75 694.75,434.00 697.25,426.00 699.00,429.75 701.00,424.75 703.50,428.50 706.00,426.00 709.00,429.75 711.50,426.00 714.00,423.50 716.50,422.25 719.00,419.00 721.00,416.50 722.25,418.50 723.50,433.00 725.50,430.50 728.00,424.00 731.00,423.00 733.50,420.50 736.50,420.50 739.00,424.00 741.00,429.75 743.50,431.00 746.00,434.00 748.00,436.50 750.50,433.50 753.00,429.00 755.50,431.00 758.00,424.75 761.50,424.00 763.50,428.50 765.50,432.25 768.00,429.00 769.75,431.50 772.25,424.75 774.75,425.50 777.25,431.50 779.75,427.25 782.25,432.25 784.75,427.25 786.50,427.25 788.50,431.50 790.50,430.50 792.25,424.00 794.00,432.25 796.00,429.75 798.00,427.25 799.00,421.00 801.00,423.00" fill="none" stroke="#1463c4" stroke-width="1.25" stroke-linejoin="round"/></g>
<rect x="14.5" y="379.5" width="792" height="87" fill="none" stroke="#d4d4d4" stroke-width="1" shape-rendering="crispEdges"/>
<text x="20" y="391.5" fill="#1463c4">RSI (14)</text>
<g fill="#555" clip-path="url(#t3)">
<text x="811.2" y="398.8">80.00</text>
<text x="811.2" y="433.8">40.00</text>
<text x="811.2" y="468.8">0.0000</text>
</g>
<rect x="808" y="409.2" width="47" height="16.6" fill="#1155cc"/>
<text x="811.2" y="421.7" fill="#fff" font-weight="bold">50.38</text>
<g shape-rendering="crispEdges">
<rect x="14" y="470" width="792" height="39.5" fill="#ffd6d6"/>
<rect x="14" y="537.5" width="792" height="19.5" fill="#d9ecd9"/>
<rect x="13" y="488" width="793" height="1" fill="#000" fill-opacity="0.137"/>
<rect x="13" y="523" width="793" height="1" fill="#000" fill-opacity="0.137"/>
<rect x="98" y="470" width="1" height="87" fill="#000" fill-opacity="0.137"/>
<rect x="176" y="470" width="1" height="87" fill="#000" fill-opacity="0.137"/>
<rect x="255" y="470" width="1" height="87" fill="#000" fill-opacity="0.137"/>
<rect x="333" y="470" width="1" height="87" fill="#000" fill-opacity="0.137"/>
<rect x="412" y="470" width="1" height="87" fill="#000" fill-opacity="0.137"/>
<rect x="490" y="470" width="1" height="87" fill="#000" fill-opacity="0.137"/>
<rect x="569" y="470" width="1" height="87" fill="#000" fill-opacity="0.137"/>
<rect x="647" y="470" width="1" height="87" fill="#000" fill-opacity="0.137"/>
<rect x="726" y="470" width="1" height="87" fill="#000" fill-opacity="0.137"/>
<rect x="19.5" y="470" width="77.0" height="87" fill="#000" fill-opacity="0.08" shape-rendering="auto"/>
<rect x="176" y="470" width="75.5" height="87" fill="#000" fill-opacity="0.08" shape-rendering="auto"/>
<rect x="333" y="470" width="75" height="87" fill="#000" fill-opacity="0.08" shape-rendering="auto"/>
<rect x="490.5" y="470" width="75.0" height="87" fill="#000" fill-opacity="0.08" shape-rendering="auto"/>
<rect x="647.5" y="470" width="74.5" height="87" fill="#000" fill-opacity="0.08" shape-rendering="auto"/>
</g>
<g shape-rendering="crispEdges">
<rect x="13" y="509" width="793" height="1" fill="#f76262"/>
<rect x="13" y="537" width="793" height="1" fill="#55aa55"/>
</g>
<g clip-path="url(#c4)"><polyline points="19.00,522.25 20.75,513.50 22.75,522.25 24.50,528.00 26.50,519.75 28.50,523.50 30.25,519.75 32.00,524.75 34.00,520.50 36.00,526.00 39.00,518.50 42.00,512.25 44.00,514.75 46.50,511.00 49.00,508.50 50.25,512.25 52.00,509.00 54.00,508.00 55.75,516.00 57.75,513.50 60.25,512.25 62.75,519.75 65.25,523.00 67.75,522.25 69.00,533.00 71.00,521.50 72.75,527.25 74.75,521.50 76.50,528.00 78.50,532.25 80.25,531.00 82.75,537.25 85.25,541.00 87.75,547.25 89.50,534.75 91.50,527.25 93.50,528.00 96.00,532.25 98.50,529.75 101.00,534.75 104.00,539.75 106.50,540.50 108.50,532.25 110.25,536.00 112.75,526.00 115.25,524.00 117.75,530.50 121.00,531.50 124.00,526.00 127.00,526.00 129.50,522.25 131.50,511.00 132.75,521.00 134.50,512.25 137.75,511.50 139.50,511.00 141.50,524.75 142.75,529.75 144.00,519.75 146.50,530.50 148.50,531.50 150.25,509.75 152.00,499.00 154.00,503.50 156.00,513.00 157.75,503.50 159.50,506.50 161.00,512.25 162.75,502.25 164.75,497.25 167.00,503.00 169.50,503.50 171.50,513.50 173.00,515.50 174.50,507.25 175.75,505.50 177.00,533.50 178.25,522.25 179.50,534.00 181.50,532.25 184.00,533.00 186.50,531.00 189.00,531.50 191.00,526.00 192.75,528.50 194.50,525.50 196.00,529.75 197.75,517.25 199.75,512.25 201.50,524.75 203.50,528.50 205.25,524.75 207.00,526.50 209.00,533.00 211.00,528.50 212.75,528.00 214.75,536.50 216.50,523.50 218.50,512.25 220.50,507.25 222.00,512.25 224.00,516.00 226.00,527.25 227.25,537.25 228.00,537.25 230.00,534.00 231.75,538.50 234.25,527.25 236.00,513.50 237.50,514.75 239.25,504.75 241.75,494.75 244.25,490.50 246.75,487.25 248.50,494.75 250.50,499.75 252.50,505.50 254.25,508.50 256.00,518.50 258.00,523.50 260.00,525.50 262.50,523.00 265.00,524.75 267.50,529.75 270.00,528.50 271.75,531.00 273.50,541.00 275.50,537.25 277.50,538.50 279.25,533.50 281.00,534.75 283.00,529.75 285.00,532.25 287.50,519.75 289.25,523.50 291.75,518.50 293.50,517.25 296.00,509.75 298.00,507.25 300.50,506.50 303.00,505.50 304.75,499.75 306.25,498.00 307.50,507.25 308.50,525.50 310.00,519.75 311.75,524.75 313.50,514.75 315.50,516.00 317.50,514.00 318.75,528.50 320.50,540.50 322.00,527.25 323.75,524.75 326.00,524.00 328.50,522.25 330.50,512.25 332.00,522.25 333.50,517.25 335.50,519.75 337.50,521.00 339.25,526.00 340.50,522.25 342.00,532.25 343.50,524.75 345.50,524.00 347.50,522.25 350.00,518.50 353.00,517.25 355.00,514.75 356.75,508.50 358.50,518.50 360.50,519.75 363.00,523.00 365.00,521.50 366.75,513.50 368.50,504.00 370.50,504.75 371.75,510.50 373.50,505.50 374.50,516.00 376.00,526.00 377.50,516.00 379.25,524.00 381.00,518.50 383.00,518.00 385.00,526.00 387.50,529.00 390.00,519.00 391.50,518.50 393.00,528.00 395.50,526.50 397.50,524.75 398.75,518.50 400.50,531.00 402.25,538.50 404.25,538.50 406.00,532.25 407.50,519.75 409.25,510.50 410.50,509.75 412.50,514.00 415.00,516.00 416.75,519.75 419.25,517.25 421.00,521.50 423.00,531.00 425.00,539.75 426.75,544.00 428.00,532.25 430.00,534.75 431.75,529.75 433.50,534.75 435.50,526.00 437.50,534.00 439.25,522.25 442.00,519.75 444.00,518.50 445.75,526.00 447.50,531.50 449.50,524.75 452.00,520.50 454.50,519.75 456.50,522.25 458.00,542.25 460.00,534.00 462.00,536.00 464.50,539.75 467.00,552.25 469.00,543.50 471.50,541.00 474.00,545.50 476.00,536.00 478.25,538.50 480.00,541.50 482.50,539.75 484.50,528.50 485.75,516.00 487.50,514.00 489.50,522.25 491.50,516.50 493.25,522.25 495.75,526.50 498.25,522.25 500.75,516.00 502.50,514.75 504.50,519.75 507.00,519.00 509.00,521.00 510.75,528.50 512.75,524.75 515.25,521.50 517.00,537.25 519.00,542.25 520.75,534.00 523.25,537.25 525.75,540.50 529.50,540.50 533.25,538.50 535.00,524.00 537.00,536.00 539.00,539.75 540.75,526.00 543.25,533.50 545.75,537.25 548.25,535.50 549.50,514.75 550.75,523.50 552.50,513.50 554.00,522.25 555.75,516.00 557.50,509.75 559.50,512.25 562.00,514.00 564.50,526.00 565.75,503.50 567.00,490.50 568.50,503.50 570.00,495.50 572.00,499.75 574.00,495.50 576.00,498.50 577.75,503.50 579.50,502.25 581.00,508.50 582.00,521.00 584.50,522.25 587.00,520.50 589.50,527.25 592.00,533.00 594.50,533.50 596.50,526.00 598.25,528.50 600.00,524.00 603.25,519.00 605.75,519.75 608.25,521.00 610.75,519.75 613.25,519.00 615.75,522.25 617.75,530.50 620.75,541.00 623.25,536.00 625.75,531.50 628.25,522.25 630.75,516.00 633.25,514.75 635.75,517.25 637.50,523.50 640.75,522.25 642.75,519.75 644.00,528.50 645.50,538.50 648.00,536.00 649.75,534.75 651.50,540.50 653.50,533.00 655.50,529.75 657.25,533.50 659.75,526.50 661.50,529.75 664.00,525.50 666.00,527.25 668.00,523.50 670.50,526.50 673.00,524.00 676.00,525.50 679.00,524.00 681.00,528.00 683.00,522.25 685.50,525.50 688.00,523.00 690.50,526.00 693.00,525.50 694.75,531.50 697.25,523.50 699.00,527.25 701.00,519.00 703.50,526.00 705.50,524.00 708.50,529.75 711.00,523.50 713.50,519.75 716.00,519.00 718.50,516.00 721.00,512.25 722.25,514.75 723.50,533.50 725.50,531.50 728.00,523.00 730.50,522.25 733.00,518.50 736.00,517.25 738.50,519.75 740.50,526.00 742.25,530.50 744.00,532.25 745.50,539.75 746.75,538.50 748.00,548.00 749.75,543.50 751.50,541.00 753.00,530.50 754.75,533.50 757.25,522.25 759.75,518.00 762.25,517.25 764.00,522.25 766.00,531.00 768.00,525.50 769.75,531.50 772.25,521.00 774.75,520.50 777.25,533.50 779.75,524.00 782.25,533.00 784.75,524.00 786.50,524.75 788.50,533.00 790.50,530.50 792.25,519.75 794.00,531.50 796.00,528.50 797.75,526.00 798.75,517.25 801.00,518.50" fill="none" stroke="#1463c4" stroke-width="1.25" stroke-linejoin="round"/></g>
<rect x="14.5" y="470.5" width="792" height="87" fill="none" stroke="#d4d4d4" stroke-width="1" shape-rendering="crispEdges"/>
<text x="20" y="482.5" fill="#1463c4">PGO (14)</text>
<g fill="#555" clip-path="url(#t4)">
<text x="811.2" y="490.3">5.000</text>
<text x="811.2" y="524.8">0.0000</text>
<text x="811.2" y="559.3">-5.000</text>
</g>
<rect x="808" y="505.2" width="47" height="16.5" fill="#1155cc"/>
<text x="811.2" y="517.7" fill="#fff" font-weight="bold">0.5634</text>
<g fill="#666" text-anchor="middle">
<text x="112.6" y="573.5">07/09 09:00</text>
<text x="191" y="573.5">08/09 09:10</text>
<text x="269.5" y="573.5">09/09 09:11</text>
<text x="348" y="573.5">12/09 09:10</text>
<text x="426.8" y="573.5">13/09 09:14</text>
<text x="505" y="573.5">14/09 09:11</text>
<text x="583.5" y="573.5">15/09 09:10</text>
<text x="662" y="573.5">16/09 09:10</text>
<text x="740.5" y="573.5">19/09 09:11</text>
</g>
</svg>
</body></html>
